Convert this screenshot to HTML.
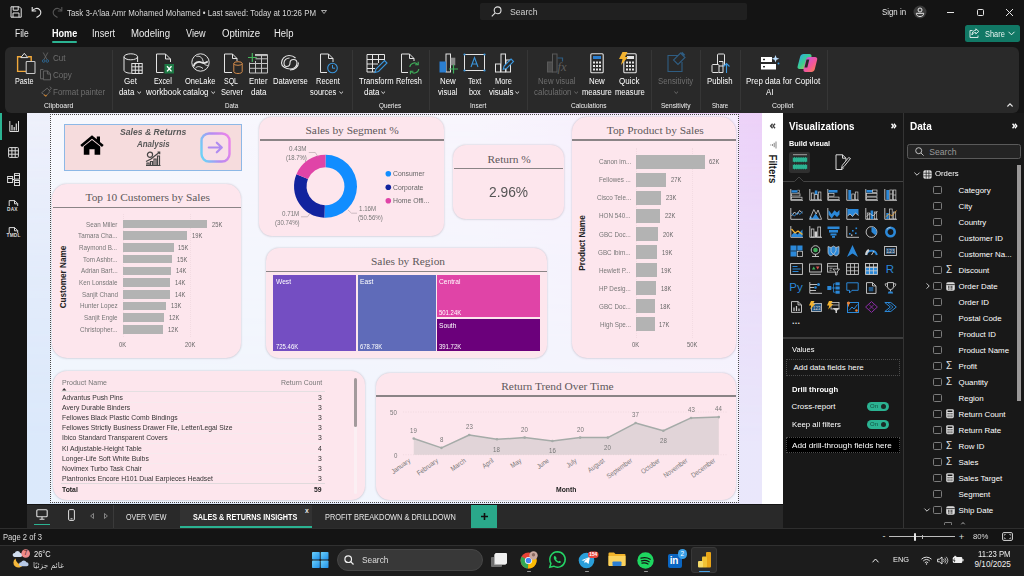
<!DOCTYPE html>
<html lang="en"><head><meta charset="utf-8"><title>Power BI - Sales &amp; Returns Insights</title>
<style>
*{box-sizing:border-box;margin:0;padding:0}
html,body{width:1024px;height:576px;overflow:hidden;background:#141414}
body{position:relative;font-family:"Liberation Sans","DejaVu Sans",sans-serif;color:#fff;font-size:9px}
.a{position:absolute}
.t{position:absolute;white-space:nowrap;line-height:1}
.c{transform:translateX(-50%)}
.r{transform:translateX(-100%)}
svg{position:absolute;overflow:visible}
.serif{font-family:"Liberation Serif","DejaVu Serif",serif}
.card{position:absolute;background:#fde6ed;box-shadow:0 0 2px rgba(120,115,125,.34),0 .5px 2px rgba(120,110,130,.1)}
.ttl{position:absolute;white-space:nowrap;line-height:1;font-family:"Liberation Serif","DejaVu Serif",serif;color:#5f5a5c;transform:translateX(-50%)}
.hl{position:absolute;height:1.5px;background:#8a8486}
.bar{position:absolute;background:#b3b3b3}
.yl{position:absolute;white-space:nowrap;line-height:1;color:#777;font-size:7.6px;transform:translateX(-100%)}
.vl{position:absolute;white-space:nowrap;line-height:1;color:#666;font-size:7.6px}
.rl{position:absolute;white-space:nowrap;line-height:1;font-size:8.2px;color:#fff}
.rg{position:absolute;white-space:nowrap;line-height:1;font-size:7.4px;color:#dcdcdc;transform:translateX(-50%)}
.rd{color:#6e6e6e}
.sep{position:absolute;width:1px;background:#363636;top:50px;height:60px}
.fld{position:absolute;white-space:nowrap;line-height:1;font-size:7.9px;color:#fff;left:958.6px}
.cb{position:absolute;left:933px;width:8.5px;height:8.5px;border:1px solid #7c7c7c;border-radius:1.5px}
.tr{position:absolute;white-space:nowrap;line-height:1;font-size:7.8px;color:#333;left:62px}
.tn{position:absolute;white-space:nowrap;line-height:1;font-size:7.8px;color:#333;left:321.5px;transform:translateX(-100%)}
.tl{position:absolute;left:61px;width:264px;height:.8px;background:#f7eaee}
</style></head>
<body>
<div class="a" style="left:0;top:0;width:1024px;height:46px;background:#141414"></div>
<svg style="left:10px;top:6px" width="12" height="12" viewBox="0 0 12 12" fill="none" stroke="#e6e6e6" stroke-width="1"><path d="M1 .8h8.3l1.9 1.9v8.5H1z"/><path d="M3.2 .8v3.4h5V.8M3 11.2V7h6v4.2"/></svg>
<svg style="left:31px;top:6px" width="12" height="12" viewBox="0 0 12 12" fill="none" stroke="#e6e6e6" stroke-width="1.1"><path d="M1.2 1v4h4"/><path d="M1.5 4.8C3 2.2 6.5 1.5 8.6 3.6c2 2 1.5 5 -.8 6.4L5.5 11.5"/></svg>
<svg style="left:51px;top:6px" width="12" height="12" viewBox="0 0 12 12" fill="none" stroke="#555" stroke-width="1.1"><path d="M10.8 1v4h-4"/><path d="M10.5 4.8C9 2.2 5.5 1.5 3.4 3.6c-2 2-1.5 5 .8 6.4L6.5 11.5"/></svg>
<svg style="left:321.3px;top:9.8px" width="6" height="4" viewBox="0 0 6 4" fill="none" stroke="#cfcfcf" stroke-width=".8"><path d="M.5 .5h5L3 3.5z"/></svg>
<div class="a" style="left:480px;top:3px;width:267px;height:17px;background:#202020;border-radius:2px"></div>
<svg style="left:491px;top:6px" width="11" height="11" viewBox="0 0 11 11" fill="none" stroke="#e0e0e0" stroke-width="1.1"><circle cx="6.6" cy="4.3" r="3.4"/><path d="M4.2 6.8L.8 10.3"/></svg>
<svg style="left:912.5px;top:4.5px" width="14" height="14" viewBox="0 0 14 14"><circle cx="7" cy="7" r="6.5" fill="#3a3a3a"/><circle cx="7" cy="5" r="2" fill="none" stroke="#e6e6e6" stroke-width="1"/><path d="M3.3 8.3h7.4c0 2.2-1.7 3.2-3.7 3.2s-3.7-1-3.7-3.2z" fill="none" stroke="#e6e6e6" stroke-width="1"/></svg>
<div class="a" style="left:947px;top:11.5px;width:7px;height:1px;background:#e6e6e6"></div>
<div class="a" style="left:976.5px;top:8.5px;width:7px;height:7px;border:1px solid #e6e6e6;border-radius:1.5px"></div>
<svg style="left:1005.5px;top:8.5px" width="7" height="7" viewBox="0 0 7 7" stroke="#e6e6e6" stroke-width="1"><path d="M0 0L7 7M7 0L0 7"/></svg>
<div class="a" style="left:51.5px;top:41px;width:25px;height:1.5px;background:#2bb392;border-radius:1px"></div>
<div class="t" style="left:67px;top:9.05px;font-size:8.5px;color:#d8d8d8;transform-origin:0 50%;transform:scaleX(0.929);">Task 3-A'laa Amr Mohamed Mohamed • Last saved: Today at 10:26 PM</div>
<div class="t" style="left:510px;top:6.95px;font-size:9.5px;color:#d0d0d0;transform-origin:0 50%;transform:scaleX(0.914);">Search</div>
<div class="t" style="left:881.75px;top:7.7px;font-size:8.6px;color:#e8e8e8;transform-origin:0 50%;transform:scaleX(0.913);">Sign in</div>
<div class="t" style="left:15px;top:28.6px;font-size:10px;color:#ececec;transform-origin:0 50%;transform:scaleX(0.853);">File</div>
<div class="t" style="left:51.5px;top:28.6px;font-size:10px;color:#fff;font-weight:bold;transform-origin:0 50%;transform:scaleX(0.909);">Home</div>
<div class="t" style="left:92px;top:28.6px;font-size:10px;color:#ececec;transform-origin:0 50%;transform:scaleX(0.92);">Insert</div>
<div class="t" style="left:131.25px;top:28.6px;font-size:10px;color:#ececec;transform-origin:0 50%;transform:scaleX(0.961);">Modeling</div>
<div class="t" style="left:186.25px;top:28.6px;font-size:10px;color:#ececec;transform-origin:0 50%;transform:scaleX(0.907);">View</div>
<div class="t" style="left:221.5px;top:28.6px;font-size:10px;color:#ececec;transform-origin:0 50%;transform:scaleX(0.963);">Optimize</div>
<div class="t" style="left:274.25px;top:28.6px;font-size:10px;color:#ececec;transform-origin:0 50%;transform:scaleX(0.948);">Help</div>
<div class="a" style="left:964.5px;top:25px;width:55px;height:16.5px;background:#117865;border-radius:2.5px"></div>
<svg style="left:969px;top:28px" width="11" height="10" viewBox="0 0 11 10" fill="none" stroke="#e6f4f0" stroke-width=".9"><path d="M3.5 2.5H1v7h8V7.5"/><path d="M6.8 .8l3 2.6-3 2.6V4.5C4.5 4.5 3.5 5.5 3 7c0-3 1.5-4.6 3.8-4.7z"/></svg>
<svg style="left:1008px;top:31px" width="7" height="5" viewBox="0 0 7 5" fill="none" stroke="#e6f4f0" stroke-width="1"><path d="M.5 .8L3.5 3.8 6.5 .8"/></svg>
<div class="t" style="left:985px;top:29.6px;font-size:9px;color:#e6f4f0;transform-origin:0 50%;transform:scaleX(0.822);">Share</div>
<div class="a" style="left:5px;top:46.5px;width:1014px;height:66px;background:#292929;border-radius:6px"></div>
<svg style="left:15.5px;top:52px" width="20" height="23" viewBox="0 0 20 23" fill="none"><path d="M5.2 4.8H1.6v14.6H10M11.8 4.8h3.4V9" stroke="#f2a93b" stroke-width="1.4"/><path d="M4.8 5.6L8.3 1.3l3.5 4.3z" stroke="#e4e4e4" stroke-width="1" stroke-linejoin="round"/><rect x="10.2" y="9.5" width="8.8" height="12" rx=".8" fill="#292929" stroke="#c8c8c8" stroke-width="1.1"/></svg>
<svg style="left:42px;top:52px" width="7" height="11" viewBox="0 0 7 11" fill="none"><path d="M1.2 .5L5 7.5M5.8 .5L2 7.5" stroke="#6a6a6a" stroke-width=".8"/><circle cx="1.7" cy="9" r="1.3" stroke="#2f6f9e" stroke-width=".8"/><circle cx="5.3" cy="9" r="1.3" stroke="#2f6f9e" stroke-width=".8"/></svg>
<svg style="left:40px;top:69px" width="11" height="11" viewBox="0 0 11 11" fill="none" stroke="#6a6a6a" stroke-width=".9"><path d="M3.4 9.8H.5V.5h2.9"/><path d="M3.4 2h4.2l2.9 2.8v6H3.4z"/><path d="M7.4 2v3h3"/></svg>
<svg style="left:40.5px;top:86px" width="11" height="11" viewBox="0 0 11 11" fill="none"><path d="M8.8 .6l1.6 1.6-2.6 3" stroke="#6a6a6a" stroke-width=".9"/><path d="M6.2 2.2l3 3L5 10.2.6 6.8z" stroke="#6a6a6a" stroke-width=".9" stroke-linejoin="round"/><path d="M3 8.8l1.8 1.2 1-1" stroke="#b9772d" stroke-width="1.2"/></svg>
<div class="sep" style="left:112px"></div>
<svg style="left:122.5px;top:52.5px" width="21" height="22" viewBox="0 0 21 22" fill="none" stroke="#e4e4e4" stroke-width="1"><ellipse cx="7.8" cy="3.8" rx="6.8" ry="3"/><path d="M1 3.8v13.4c0 1.6 3 3 6.8 3M14.6 3.8V9"/><rect x="8.8" y="10.5" width="10.4" height="10" fill="#292929"/><path d="M8.8 13.8h10.4M8.8 17.2h10.4M12.3 10.5v10M15.8 10.5v10"/></svg>
<svg style="left:155px;top:52.5px" width="20" height="22" viewBox="0 0 20 22" fill="none"><path d="M1.5 1h9l5 5v3M1.5 1v18.5h7" stroke="#e4e4e4" stroke-width="1"/><path d="M10.5 1v5h5" stroke="#e4e4e4" stroke-width="1"/><rect x="9.5" y="11" width="9.5" height="9.5" fill="#1d7a45"/><path d="M12 13.2l4.5 5.2M16.5 13.2L12 18.4" stroke="#fff" stroke-width="1.3"/></svg>
<svg style="left:190.5px;top:53px" width="19" height="20" viewBox="0 0 19 20" fill="none"><circle cx="9.5" cy="9.5" r="8.7" stroke="#e4e4e4" stroke-width="1"/><path d="M2.5 13.5c1-4 5-5.5 8-4 2 1 4 .8 6.3-1" stroke="#e4e4e4" stroke-width="1.8"/><path d="M5.5 3.5c3-1 6 1 6.5 4.5s3 4.5 5 4.5" stroke="#e4e4e4" stroke-width="1"/><path d="M4 15.5c2-2.5 5-2.5 8 0" stroke="#e4e4e4" stroke-width="1"/></svg>
<svg style="left:223px;top:52.5px" width="21" height="22" viewBox="0 0 21 22" fill="none"><path d="M1.5 1h8l4.5 4.5V8M1.5 1v18.5H9M9.5 1v4.5H14" stroke="#e4e4e4" stroke-width="1"/><ellipse cx="15" cy="10.5" rx="4.2" ry="1.8" stroke="#d38b4a" stroke-width="1"/><path d="M10.8 10.5v8.2c0 1 1.9 1.8 4.2 1.8s4.2-.8 4.2-1.8v-8.2" stroke="#d38b4a" stroke-width="1"/></svg>
<svg style="left:248px;top:52.5px" width="20" height="22" viewBox="0 0 20 22" fill="none"><path d="M7 1.5h12.5v18.5H1.5V9.5M7 2.6h12.5M1.5 10.5h18M1.5 15.3h18M7.5 8v12M13.5 1.5v18.5M7.5 5.8h12" stroke="#c4c4c4" stroke-width="1"/><path d="M4.3 0v9M0 4.5h8.8" stroke="#46b35c" stroke-width="1.2"/></svg>
<svg style="left:280px;top:54px" width="20" height="18" viewBox="0 0 20 18" fill="none" stroke="#e4e4e4" stroke-width="1.1"><path d="M10 9c0-2 1.5-3.5 3.5-3.5S17 7 17 9c0 3.5-3 6-7 6S1.5 12.5 1.5 9 4.5 1.5 9 1.5c3 0 5 1 6.5 2.5"/><path d="M10 9c0 2-1.5 3.5-3.5 3.5S4 11 4 9c0-2.8 2.5-5 5.5-5"/><path d="M18.5 8.5c0 4-3.5 7.5-8.5 7.5"/></svg>
<svg style="left:319px;top:52.5px" width="20" height="22" viewBox="0 0 20 22" fill="none"><path d="M1.5 1h8l4.5 4.5V9M1.5 1v18.5H8M9.5 1v4.5H14" stroke="#e4e4e4" stroke-width="1"/><circle cx="13.5" cy="15" r="4.8" stroke="#3a96dd" stroke-width="1.1"/><path d="M13.5 12v3.2h2.5" stroke="#3a96dd" stroke-width="1"/></svg>
<div class="sep" style="left:351.5px"></div>
<svg style="left:366px;top:52.5px" width="22" height="22" viewBox="0 0 22 22" fill="none"><path d="M1 1.5h17.5V8M1 1.5V19h9M1 6.5h17.5M1 11h11M1 15.5h8M6.5 1.5V19M12.5 1.5V10" stroke="#e4e4e4" stroke-width="1"/><path d="M18.5 7.5l2.5 2.5-8.5 8.5-3.5 1 1-3.5z" fill="#292929" stroke="#3a96dd" stroke-width="1.1"/></svg>
<svg style="left:400px;top:52.5px" width="21" height="22" viewBox="0 0 21 22" fill="none"><path d="M1.5 1h8l4.5 4.5V8M1.5 1v18.5H8M9.5 1v4.5H14" stroke="#e4e4e4" stroke-width="1"/><path d="M9.8 14a4.6 4.6 0 0 1 8-2.5M18.8 16a4.6 4.6 0 0 1-8 2.5" stroke="#3fae5a" stroke-width="1.1"/><path d="M18.2 8.8v3h-3M10.4 21.2v-3h3" stroke="#3fae5a" stroke-width="1.1"/></svg>
<div class="sep" style="left:428.5px"></div>
<svg style="left:438.5px;top:52.5px" width="20" height="22" viewBox="0 0 20 22" fill="none"><rect x="7" y="1" width="4.5" height="18" stroke="#e4e4e4" stroke-width="1"/><rect x="12" y="5" width="4" height="7" fill="#8a8a8a" stroke="#8a8a8a" stroke-width=".6"/><rect x="1" y="9" width="5.5" height="10" fill="#2b7fd1" stroke="#2b7fd1" stroke-width="1"/><path d="M14.5 11.5v9M10 16h9" stroke="#3fae5a" stroke-width="1.2"/></svg>
<svg style="left:463px;top:53px" width="23" height="20" viewBox="0 0 23 20" fill="none"><rect x="1.5" y="1.5" width="20" height="16" stroke="#e4e4e4" stroke-width="1"/><path d="M8 14l3.5-9.5L15 14M9.2 11h4.6" stroke="#3a96dd" stroke-width="1.1"/><g fill="#3a96dd"><circle cx="1.5" cy="1.5" r="1.1"/><circle cx="21.5" cy="1.5" r="1.1"/><circle cx="1.5" cy="17.5" r="1.1"/><circle cx="21.5" cy="17.5" r="1.1"/></g></svg>
<svg style="left:494px;top:52.5px" width="20" height="22" viewBox="0 0 20 22" fill="none"><rect x="7" y="1" width="4.5" height="18" stroke="#e4e4e4" stroke-width="1"/><rect x="1.5" y="11" width="5" height="8" stroke="#e4e4e4" stroke-width="1"/><rect x="12" y="7" width="4.5" height="12" stroke="#e4e4e4" stroke-width="1"/><path d="M17 6l2.5 2.5-7 7-3.2.8.8-3.2z" fill="#292929" stroke="#3a96dd" stroke-width="1.1"/></svg>
<div class="sep" style="left:527px"></div>
<svg style="left:546px;top:52.5px" width="21" height="22" viewBox="0 0 21 22" fill="none"><rect x="6.5" y="1" width="4.5" height="18" stroke="#5a5a5a" stroke-width="1"/><rect x="1.5" y="9" width="5" height="10" fill="#4a4a4a" stroke="#5a5a5a" stroke-width="1"/><path d="M11.5 5h5v3.5" stroke="#2f5d82" stroke-width="1.2"/></svg>
<div class="t serif" style="left:557.5px;top:61px;font-size:12.5px;font-style:italic;color:#5e5e5e">fx</div>
<svg style="left:589.5px;top:52.5px" width="14" height="21" viewBox="0 0 14 21" fill="none"><rect x=".8" y=".8" width="12.4" height="19" rx="1" stroke="#e4e4e4" stroke-width="1.1"/><rect x="3" y="3" width="8" height="3" fill="#2b7fd1"/><g fill="#e4e4e4"><rect x="3" y="8.5" width="2" height="2"/><rect x="6" y="8.5" width="2" height="2"/><rect x="9" y="8.5" width="2" height="2"/><rect x="3" y="12" width="2" height="2"/><rect x="6" y="12" width="2" height="2"/><rect x="9" y="12" width="2" height="2"/><rect x="3" y="15.5" width="2" height="2"/><rect x="6" y="15.5" width="2" height="2"/><rect x="9" y="15.5" width="2" height="2"/></g></svg>
<svg style="left:618.5px;top:51.5px" width="18" height="22" viewBox="0 0 18 22" fill="none"><rect x="4.8" y="1.8" width="12.4" height="19" rx="1" stroke="#e4e4e4" stroke-width="1.1"/><rect x="8" y="4" width="7" height="3" fill="#e4e4e4"/><g fill="#e4e4e4"><rect x="7" y="9.5" width="2" height="2"/><rect x="10" y="9.5" width="2" height="2"/><rect x="13" y="9.5" width="2" height="2"/><rect x="7" y="13" width="2" height="2"/><rect x="10" y="13" width="2" height="2"/><rect x="13" y="13" width="2" height="2"/><rect x="7" y="16.5" width="2" height="2"/><rect x="10" y="16.5" width="2" height="2"/><rect x="13" y="16.5" width="2" height="2"/></g><path d="M3.5 0h5L6 5h3L2 13l1.5-6H0z" fill="#f3b32f"/></svg>
<div class="sep" style="left:651px"></div>
<svg style="left:666px;top:52px" width="21" height="22" viewBox="0 0 21 22" fill="none" stroke="#2f5d82" stroke-width="1.1"><path d="M12 3.5H2v16h14V10"/><path d="M14.5 1l4.5 4.5-7 7-4.5-4.5z"/><path d="M15.5 .5l3 3" stroke-width="2"/></svg>
<div class="sep" style="left:699.5px"></div>
<svg style="left:710.5px;top:52.5px" width="20" height="22" viewBox="0 0 20 22" fill="none"><rect x="6.5" y="1" width="7" height="12" rx="1" stroke="#e4e4e4" stroke-width="1"/><rect x="1" y="11.5" width="7" height="8" rx="1" fill="#292929" stroke="#e4e4e4" stroke-width="1"/><path d="M8 8.5h4v11H8" stroke="#e4e4e4" stroke-width="1"/><path d="M15.5 20v-9M12.5 13.5l3-3 3 3" stroke="#3a96dd" stroke-width="1.1"/></svg>
<div class="sep" style="left:739.5px"></div>
<svg style="left:761px;top:55px" width="19" height="16" viewBox="0 0 19 16"><rect x="0" y="2" width="11" height="5" fill="#fff"/><rect x="0" y="9" width="15" height="5.5" fill="#fff"/><rect x="2" y="3.8" width="2" height="1.4" fill="#292929"/><rect x="2" y="11" width="2" height="1.4" fill="#292929"/><path d="M14.5 0l1 2.8 2.8 1-2.8 1-1 2.8-1-2.8-2.8-1 2.8-1z" fill="#bfe0ff"/><circle cx="17.5" cy="8.5" r="1" fill="#3a96dd"/></svg>
<svg style="left:796.5px;top:53px" width="21" height="20" viewBox="0 0 21 20"><defs><linearGradient id="cg1" x1="0" y1="0" x2="1" y2="1"><stop offset="0" stop-color="#2aa5f5"/><stop offset=".5" stop-color="#3ccf8e"/><stop offset="1" stop-color="#f7c531"/></linearGradient><linearGradient id="cg2" x1="0" y1="0" x2="1" y2="1"><stop offset="0" stop-color="#b45cf0"/><stop offset=".55" stop-color="#f2569b"/><stop offset="1" stop-color="#f98a3d"/></linearGradient></defs><path d="M6.5 1h6c1.5 0 2.3 1 2 2.5l-2.5 10c-.4 1.5-1.5 2.5-3 2.5H2.5C1 16 .2 15 .6 13.5L3.2 3.5C3.6 2 5 1 6.5 1z" fill="url(#cg1)"/><path d="M12 4h6c1.5 0 2.6 1 2.2 2.5l-2.5 10c-.4 1.5-1.7 2.5-3.2 2.5H8.5c-1.5 0-2.3-1-2-2.5L9 6.5C9.4 5 10.5 4 12 4z" fill="url(#cg2)"/><path d="M9.5 6.5l2.8 0-2 8-2.8 0z" fill="#292929"/></svg>
<div class="sep" style="left:826.5px"></div>
<svg style="left:1006.5px;top:102.5px" width="6" height="4" viewBox="0 0 6 4" fill="none" stroke="#e4e4e4" stroke-width="1.1"><path d="M.4 3.5L3 .8 5.6 3.5"/></svg>
<div class="t" style="left:14.5px;top:76.95px;font-size:8.3px;color:#ffffff;transform-origin:0 50%;transform:scaleX(0.872);">Paste</div>
<div class="t" style="left:53px;top:53.55px;font-size:8.3px;color:#6e6e6e;transform-origin:0 50%;transform:scaleX(0.968);">Cut</div>
<div class="t" style="left:53px;top:70.85px;font-size:8.3px;color:#6e6e6e;transform-origin:0 50%;transform:scaleX(0.968);">Copy</div>
<div class="t" style="left:53px;top:88.35px;font-size:8.3px;color:#6e6e6e;transform-origin:0 50%;transform:scaleX(0.968);">Format painter</div>
<div class="t" style="left:124.25px;top:76.95px;font-size:8.3px;color:#ffffff;transform-origin:0 50%;transform:scaleX(0.972);">Get</div>
<div class="t" style="left:119.25px;top:87.95px;font-size:8.3px;color:#ffffff;transform-origin:0 50%;transform:scaleX(0.944);">data</div>
<div class="t" style="left:154.25px;top:76.95px;font-size:8.3px;color:#ffffff;transform-origin:0 50%;transform:scaleX(0.875);">Excel</div>
<div class="t" style="left:145.5px;top:87.95px;font-size:8.3px;color:#ffffff;transform-origin:0 50%;transform:scaleX(0.985);">workbook</div>
<div class="t" style="left:185px;top:76.95px;font-size:8.3px;color:#ffffff;transform-origin:0 50%;transform:scaleX(0.905);">OneLake</div>
<div class="t" style="left:183.25px;top:87.95px;font-size:8.3px;color:#ffffff;transform-origin:0 50%;transform:scaleX(0.953);">catalog</div>
<div class="t" style="left:224.25px;top:76.95px;font-size:8.3px;color:#ffffff;transform-origin:0 50%;transform:scaleX(0.843);">SQL</div>
<div class="t" style="left:220.5px;top:87.95px;font-size:8.3px;color:#ffffff;transform-origin:0 50%;transform:scaleX(0.9);">Server</div>
<div class="t" style="left:248.75px;top:76.95px;font-size:8.3px;color:#ffffff;transform-origin:0 50%;transform:scaleX(0.933);">Enter</div>
<div class="t" style="left:250.5px;top:87.95px;font-size:8.3px;color:#ffffff;transform-origin:0 50%;transform:scaleX(0.96);">data</div>
<div class="t" style="left:273px;top:76.95px;font-size:8.3px;color:#ffffff;transform-origin:0 50%;transform:scaleX(0.919);">Dataverse</div>
<div class="t" style="left:315.5px;top:76.95px;font-size:8.3px;color:#ffffff;transform-origin:0 50%;transform:scaleX(0.903);">Recent</div>
<div class="t" style="left:310.25px;top:87.95px;font-size:8.3px;color:#ffffff;transform-origin:0 50%;transform:scaleX(0.903);">sources</div>
<div class="t" style="left:358.5px;top:76.95px;font-size:8.3px;color:#ffffff;transform-origin:0 50%;transform:scaleX(0.92);">Transform</div>
<div class="t" style="left:364.25px;top:87.95px;font-size:8.3px;color:#ffffff;transform-origin:0 50%;transform:scaleX(0.96);">data</div>
<div class="t" style="left:396px;top:76.95px;font-size:8.3px;color:#ffffff;transform-origin:0 50%;transform:scaleX(0.886);">Refresh</div>
<div class="t" style="left:439.75px;top:76.95px;font-size:8.3px;color:#ffffff;transform-origin:0 50%;transform:scaleX(0.949);">New</div>
<div class="t" style="left:438px;top:87.95px;font-size:8.3px;color:#ffffff;transform-origin:0 50%;transform:scaleX(0.919);">visual</div>
<div class="t" style="left:467.75px;top:76.95px;font-size:8.3px;color:#ffffff;transform-origin:0 50%;transform:scaleX(0.87);">Text</div>
<div class="t" style="left:468.5px;top:87.95px;font-size:8.3px;color:#ffffff;transform-origin:0 50%;transform:scaleX(0.878);">box</div>
<div class="t" style="left:495.25px;top:76.95px;font-size:8.3px;color:#ffffff;transform-origin:0 50%;transform:scaleX(0.899);">More</div>
<div class="t" style="left:489px;top:87.95px;font-size:8.3px;color:#ffffff;transform-origin:0 50%;transform:scaleX(0.966);">visuals</div>
<div class="t" style="left:537.75px;top:76.95px;font-size:8.3px;color:#6e6e6e;transform-origin:0 50%;transform:scaleX(0.934);">New visual</div>
<div class="t" style="left:533.75px;top:87.95px;font-size:8.3px;color:#6e6e6e;transform-origin:0 50%;transform:scaleX(0.956);">calculation</div>
<div class="t" style="left:589px;top:76.95px;font-size:8.3px;color:#ffffff;transform-origin:0 50%;transform:scaleX(0.949);">New</div>
<div class="t" style="left:582px;top:87.95px;font-size:8.3px;color:#ffffff;transform-origin:0 50%;transform:scaleX(0.921);">measure</div>
<div class="t" style="left:619px;top:76.95px;font-size:8.3px;color:#ffffff;transform-origin:0 50%;transform:scaleX(0.966);">Quick</div>
<div class="t" style="left:614.5px;top:87.95px;font-size:8.3px;color:#ffffff;transform-origin:0 50%;transform:scaleX(0.921);">measure</div>
<div class="t" style="left:658px;top:76.95px;font-size:8.3px;color:#6e6e6e;transform-origin:0 50%;transform:scaleX(0.943);">Sensitivity</div>
<div class="t" style="left:707px;top:76.95px;font-size:8.3px;color:#ffffff;transform-origin:0 50%;transform:scaleX(0.937);">Publish</div>
<div class="t" style="left:746px;top:76.95px;font-size:8.3px;color:#ffffff;transform-origin:0 50%;transform:scaleX(0.959);">Prep data for</div>
<div class="t" style="left:765.5px;top:87.95px;font-size:8.3px;color:#ffffff;transform-origin:0 50%;transform:scaleX(0.956);">AI</div>
<div class="t" style="left:794.75px;top:76.95px;font-size:8.3px;color:#ffffff;transform-origin:0 50%;transform:scaleX(0.977);">Copilot</div>
<div class="t" style="left:44px;top:101.8px;font-size:7.2px;color:#f0f0f0;transform-origin:0 50%;transform:scaleX(0.949);">Clipboard</div>
<div class="t" style="left:225px;top:101.8px;font-size:7.2px;color:#f0f0f0;transform-origin:0 50%;transform:scaleX(0.871);">Data</div>
<div class="t" style="left:379px;top:101.8px;font-size:7.2px;color:#f0f0f0;transform-origin:0 50%;transform:scaleX(0.883);">Queries</div>
<div class="t" style="left:469.75px;top:101.8px;font-size:7.2px;color:#f0f0f0;transform-origin:0 50%;transform:scaleX(0.902);">Insert</div>
<div class="t" style="left:571.25px;top:101.8px;font-size:7.2px;color:#f0f0f0;transform-origin:0 50%;transform:scaleX(0.905);">Calculations</div>
<div class="t" style="left:660.75px;top:101.8px;font-size:7.2px;color:#f0f0f0;transform-origin:0 50%;transform:scaleX(0.91);">Sensitivity</div>
<div class="t" style="left:711.5px;top:101.8px;font-size:7.2px;color:#f0f0f0;transform-origin:0 50%;transform:scaleX(0.846);">Share</div>
<div class="t" style="left:772.25px;top:101.8px;font-size:7.2px;color:#f0f0f0;transform-origin:0 50%;transform:scaleX(0.959);">Copilot</div>
<svg style="left:136.8px;top:90.6px" width="4.4" height="3.5" viewBox="0 0 5 4" fill="none" stroke="#e4e4e4" stroke-width="1.1"><path d="M.4 .7L2.5 2.8 4.6 .7"/></svg>
<svg style="left:210.8px;top:90.6px" width="4.4" height="3.5" viewBox="0 0 5 4" fill="none" stroke="#e4e4e4" stroke-width="1.1"><path d="M.4 .7L2.5 2.8 4.6 .7"/></svg>
<svg style="left:338.8px;top:90.6px" width="4.4" height="3.5" viewBox="0 0 5 4" fill="none" stroke="#e4e4e4" stroke-width="1.1"><path d="M.4 .7L2.5 2.8 4.6 .7"/></svg>
<svg style="left:381.3px;top:90.6px" width="4.4" height="3.5" viewBox="0 0 5 4" fill="none" stroke="#e4e4e4" stroke-width="1.1"><path d="M.4 .7L2.5 2.8 4.6 .7"/></svg>
<svg style="left:515.3px;top:90.6px" width="4.4" height="3.5" viewBox="0 0 5 4" fill="none" stroke="#e4e4e4" stroke-width="1.1"><path d="M.4 .7L2.5 2.8 4.6 .7"/></svg>
<svg style="left:573.5px;top:90.6px" width="4.4" height="3.5" viewBox="0 0 5 4" fill="none" stroke="#6e6e6e" stroke-width="1.1"><path d="M.4 .7L2.5 2.8 4.6 .7"/></svg>
<svg style="left:673.5px;top:90.6px" width="4.4" height="3.5" viewBox="0 0 5 4" fill="none" stroke="#6e6e6e" stroke-width="1.1"><path d="M.4 .7L2.5 2.8 4.6 .7"/></svg>
<div class="a" style="left:0;top:113px;width:27px;height:415px;background:#141414"></div>
<div class="a" style="left:0;top:113px;width:2px;height:27px;background:#2bb392"></div>
<svg style="left:8.5px;top:121px" width="10" height="11" viewBox="0 0 10 11" fill="none" stroke="#dcdcdc" stroke-width="1"><path d="M.8 0v10.5h8.7V0"/><path d="M3 9.5V4M5.2 9.5V6M7.3 9.5V2.5" stroke-width="1.2"/></svg>
<svg style="left:8px;top:147px" width="11" height="11" viewBox="0 0 11 11" fill="none" stroke="#dcdcdc" stroke-width="1"><rect x=".6" y=".6" width="9.8" height="9.8" rx=".8"/><path d="M.6 3.8h9.8M.6 7.2h9.8M3.9 .6v9.8M7.2 .6v9.8"/></svg>
<svg style="left:7px;top:173px" width="13" height="13" viewBox="0 0 13 13" fill="none" stroke="#dcdcdc" stroke-width="1"><rect x=".6" y="3.5" width="5" height="6"/><rect x="7.5" y=".6" width="5" height="5.5"/><rect x="7.5" y="7.5" width="5" height="5"/><path d="M5.6 6.5h2M.6 5.5h5M7.5 2.5h5M7.5 9.5h5"/></svg>
<svg style="left:8px;top:200px" width="11" height="13" viewBox="0 0 11 13" fill="none" stroke="#dcdcdc" stroke-width="1"><path d="M1.2 6V.6h5.5l3 3V6M6.5 .6v3.2h3.2"/></svg>
<div class="t" style="left:7px;top:207.5px;font-size:4.8px;font-weight:bold;color:#dcdcdc;letter-spacing:.2px">DAX</div>
<svg style="left:8px;top:226.5px" width="11" height="13" viewBox="0 0 11 13" fill="none" stroke="#dcdcdc" stroke-width="1"><path d="M1.2 6V.6h5.5l3 3V6M6.5 .6v3.2h3.2"/></svg>
<div class="t" style="left:6.5px;top:234px;font-size:4.8px;font-weight:bold;color:#dcdcdc;letter-spacing:.2px">TMDL</div>
<div class="a" style="left:27px;top:113px;width:735px;height:391px;background:linear-gradient(to right,#dbe9fb 0%,#e3e9fb 60%,#eae7fb 100%)"></div>
<div class="a" style="left:27px;top:113px;width:735px;height:391px;background:linear-gradient(to right,#eef0fb 0%,#efe9fa 60%,#ecd0f8 100%);-webkit-mask-image:linear-gradient(to bottom,#000 0%,rgba(0,0,0,.4) 42%,transparent 85%);mask-image:linear-gradient(to bottom,#000 0%,rgba(0,0,0,.4) 42%,transparent 85%)"></div>
<div class="a" style="left:50px;top:114px;width:688.5px;height:389px;background:rgba(255,255,255,.55);border:1px dotted #484848"></div>
<div class="a" style="left:761.5px;top:113px;width:.8px;height:391px;background:#c9c9c9"></div>
<div class="a" style="left:64px;top:124px;width:178px;height:46.5px;background:#f6dcdd;border:1px solid #8db8e6"></div>
<svg style="left:80px;top:134.5px" width="24" height="20" viewBox="0 0 24 20"><path d="M12 .3L.3 10l1.7 2L12 3.8l10 8.2 1.7-2L20 6.9V1.5h-3.2v2.8z" fill="#000"/><path d="M3.8 11.6L12 5l8.2 6.6V19.8h-5.6v-5.6h-5.2v5.6H3.8z" fill="#000"/></svg>
<div class="t" style="left:119.5px;top:127.65px;font-size:9.3px;color:#585858;font-weight:bold;font-style:italic;transform-origin:0 50%;transform:scaleX(0.929);">Sales &amp; Returns</div>
<div class="t" style="left:136.75px;top:139.65px;font-size:9.3px;color:#585858;font-weight:bold;font-style:italic;transform-origin:0 50%;transform:scaleX(0.856);">Analysis</div>
<svg style="left:145px;top:151px" width="16" height="15" viewBox="0 0 16 15" fill="none" stroke="#454545" stroke-width="1.2"><circle cx="5" cy="3.8" r="2.6"/><path d="M1 14.5h14.5M2 14.5v-2.5h2v2.5M5.5 14.5v-4h2v4M9 14.5V8h2v6.5M12.5 14.5V5h2v9.5"/><path d="M1 10.5L6 8l3-2.5L14.5 1.2M12.5 1h2.2v2.2"/></svg>
<svg style="left:200px;top:132px" width="31" height="31" viewBox="0 0 31 31" fill="none"><defs><linearGradient id="ag" x1="0" y1=".65" x2="1" y2=".35"><stop offset="0" stop-color="#6fd0f7"/><stop offset=".5" stop-color="#b48cf2"/><stop offset="1" stop-color="#e884ea"/></linearGradient></defs><linearGradient id="ag2" x1="0" y1="0" x2="1" y2="0"><stop offset="0" stop-color="#e6a4e6"/><stop offset="1" stop-color="#a48af0"/></linearGradient><rect x="1.5" y="1.5" width="28" height="28" rx="7.5" stroke="url(#ag)" stroke-width="2.4" fill="#f8dfe6"/><path d="M8.8 15.5h12.5M16.8 10.7l5 4.8-5 4.8" stroke="#b08cf0" stroke-width="2.2" stroke-linecap="round" stroke-linejoin="round"/></svg>
<div class="card" style="left:52.3px;top:183.7px;width:188.9px;height:174.5px;border-radius:15px"></div>
<div class="t" style="left:85.5px;top:191.7px;font-size:11.4px;color:#5e595b;font-family:'Liberation Serif','DejaVu Serif',serif;">Top 10 Customers by Sales</div>
<div class="hl" style="left:52.5px;top:206.6px;width:188.5px"></div>
<div class="a" style="left:122.5px;top:214px;width:0;height:123px;border-left:.7px dotted #f3dbe2"></div>
<div class="a" style="left:190px;top:214px;width:0;height:123px;border-left:.7px dotted #f3dbe2"></div>
<div class="bar" style="left:122.5px;top:219.8px;width:84.5px;height:8.6px"></div>
<div class="t" style="left:86.09px;top:220.6px;font-size:7.2px;color:#777;transform-origin:0 50%;transform:scaleX(0.875);">Sean Miller</div>
<div class="t" style="left:211.8px;top:220.6px;font-size:7.2px;color:#666;transform-origin:0 50%;transform:scaleX(0.8);">25K</div>
<div class="bar" style="left:122.5px;top:231.49px;width:64.5px;height:8.6px"></div>
<div class="t" style="left:78.04px;top:232.29px;font-size:7.2px;color:#777;transform-origin:0 50%;transform:scaleX(0.875);">Tamara Cha...</div>
<div class="t" style="left:191.8px;top:232.29px;font-size:7.2px;color:#666;transform-origin:0 50%;transform:scaleX(0.8);">19K</div>
<div class="bar" style="left:122.5px;top:243.18px;width:51px;height:8.6px"></div>
<div class="t" style="left:79.44px;top:243.98px;font-size:7.2px;color:#777;transform-origin:0 50%;transform:scaleX(0.875);">Raymond B...</div>
<div class="t" style="left:178.3px;top:243.98px;font-size:7.2px;color:#666;transform-origin:0 50%;transform:scaleX(0.8);">15K</div>
<div class="bar" style="left:122.5px;top:254.87px;width:49.5px;height:8.6px"></div>
<div class="t" style="left:82.94px;top:255.67px;font-size:7.2px;color:#777;transform-origin:0 50%;transform:scaleX(0.875);">Tom Ashbr...</div>
<div class="t" style="left:176.8px;top:255.67px;font-size:7.2px;color:#666;transform-origin:0 50%;transform:scaleX(0.8);">15K</div>
<div class="bar" style="left:122.5px;top:266.56px;width:48.5px;height:8.6px"></div>
<div class="t" style="left:80.84px;top:267.36px;font-size:7.2px;color:#777;transform-origin:0 50%;transform:scaleX(0.875);">Adrian Bart...</div>
<div class="t" style="left:175.8px;top:267.36px;font-size:7.2px;color:#666;transform-origin:0 50%;transform:scaleX(0.8);">14K</div>
<div class="bar" style="left:122.5px;top:278.25px;width:47.75px;height:8.6px"></div>
<div class="t" style="left:79.07px;top:279.05px;font-size:7.2px;color:#777;transform-origin:0 50%;transform:scaleX(0.875);">Ken Lonsdale</div>
<div class="t" style="left:175.05px;top:279.05px;font-size:7.2px;color:#666;transform-origin:0 50%;transform:scaleX(0.8);">14K</div>
<div class="bar" style="left:122.5px;top:289.94px;width:47.5px;height:8.6px"></div>
<div class="t" style="left:81.53px;top:290.74px;font-size:7.2px;color:#777;transform-origin:0 50%;transform:scaleX(0.875);">Sanjit Chand</div>
<div class="t" style="left:174.8px;top:290.74px;font-size:7.2px;color:#666;transform-origin:0 50%;transform:scaleX(0.8);">14K</div>
<div class="bar" style="left:122.5px;top:301.63px;width:43.25px;height:8.6px"></div>
<div class="t" style="left:79.78px;top:302.43px;font-size:7.2px;color:#777;transform-origin:0 50%;transform:scaleX(0.875);">Hunter Lopez</div>
<div class="t" style="left:170.55px;top:302.43px;font-size:7.2px;color:#666;transform-origin:0 50%;transform:scaleX(0.8);">13K</div>
<div class="bar" style="left:122.5px;top:313.32px;width:41.25px;height:8.6px"></div>
<div class="t" style="left:83.98px;top:314.12px;font-size:7.2px;color:#777;transform-origin:0 50%;transform:scaleX(0.875);">Sanjit Engle</div>
<div class="t" style="left:168.55px;top:314.12px;font-size:7.2px;color:#666;transform-origin:0 50%;transform:scaleX(0.8);">12K</div>
<div class="bar" style="left:122.5px;top:325.01px;width:40.75px;height:8.6px"></div>
<div class="t" style="left:80.13px;top:325.81px;font-size:7.2px;color:#777;transform-origin:0 50%;transform:scaleX(0.875);">Christopher...</div>
<div class="t" style="left:168.05px;top:325.81px;font-size:7.2px;color:#666;transform-origin:0 50%;transform:scaleX(0.8);">12K</div>
<div class="t" style="left:118.98px;top:340.7px;font-size:7.2px;color:#666;transform-origin:0 50%;transform:scaleX(0.8);">0K</div>
<div class="t" style="left:184.88px;top:340.7px;font-size:7.2px;color:#666;transform-origin:0 50%;transform:scaleX(0.8);">20K</div>
<div class="t" style="left:63.2px;top:276.6px;font-size:8.4px;font-weight:bold;color:#222;transform:translate(-50%,-50%) rotate(-90deg) scaleX(.975)">Customer Name</div>
<div class="card" style="left:259.3px;top:116.8px;width:184.5px;height:119.7px;border-radius:13px"></div>
<div class="t" style="left:305.5px;top:124.9px;font-size:11.4px;color:#5e595b;font-family:'Liberation Serif','DejaVu Serif',serif;">Sales by Segment %</div>
<div class="hl" style="left:259.5px;top:139.2px;width:184px"></div>
<svg style="left:0;top:0" width="1024" height="576" viewBox="0 0 1024 576"><path d="M325.5 154.8A31.5 31.5 0 1 1 324.39 217.78L324.83 205.29A19 19 0 1 0 325.5 167.3Z" fill="#118dff"/><path d="M324.39 217.78A31.5 31.5 0 0 1 296.44 174.15L307.97 178.97A19 19 0 0 0 324.83 205.29Z" fill="#12239e"/><path d="M296.44 174.15A31.5 31.5 0 0 1 325.5 154.8L325.5 167.3A19 19 0 0 0 307.97 178.97Z" fill="#e044a7"/><path d="M308.8 152.5h6.5l2.5 4M348 210l3.5 3.2h5.5M301 216.8h6.5l2.5-3.5" fill="none" stroke="#b9a9af" stroke-width=".7"/><circle cx="388.3" cy="173.8" r="2.8" fill="#118dff"/><circle cx="388.3" cy="187.3" r="2.8" fill="#12239e"/><circle cx="388.3" cy="200.8" r="2.8" fill="#e044a7"/></svg>
<div class="t" style="left:392.5px;top:170.1px;font-size:7.6px;color:#666;transform-origin:0 50%;transform:scaleX(0.9);">Consumer</div>
<div class="t" style="left:392.5px;top:183.6px;font-size:7.6px;color:#666;transform-origin:0 50%;transform:scaleX(0.9);">Corporate</div>
<div class="t" style="left:392.5px;top:197.1px;font-size:7.6px;color:#666;transform-origin:0 50%;transform:scaleX(0.9);">Home Offi...</div>
<div class="t" style="left:289px;top:145.1px;font-size:7px;color:#777;transform-origin:0 50%;transform:scaleX(0.9);">0.43M</div>
<div class="t" style="left:286px;top:153.8px;font-size:7px;color:#777;transform-origin:0 50%;transform:scaleX(0.849);">(18.7%)</div>
<div class="t" style="left:358.8px;top:205.3px;font-size:7px;color:#777;transform-origin:0 50%;transform:scaleX(0.884);">1.16M</div>
<div class="t" style="left:358.3px;top:213.9px;font-size:7px;color:#777;transform-origin:0 50%;transform:scaleX(0.87);">(50.56%)</div>
<div class="t" style="left:282px;top:210.3px;font-size:7px;color:#777;transform-origin:0 50%;transform:scaleX(0.889);">0.71M</div>
<div class="t" style="left:274.7px;top:219px;font-size:7px;color:#777;transform-origin:0 50%;transform:scaleX(0.866);">(30.74%)</div>
<div class="card" style="left:453px;top:145px;width:110.5px;height:74px;border-radius:13px"></div>
<div class="t" style="left:487.5px;top:153.5px;font-size:11.4px;color:#5e595b;font-family:'Liberation Serif','DejaVu Serif',serif;">Return %</div>
<div class="hl" style="left:453.5px;top:167.5px;width:109.5px"></div>
<div class="t" style="left:488.5px;top:184.95px;font-size:14.5px;color:#555;transform-origin:0 50%;transform:scaleX(0.949);">2.96%</div>
<div class="card" style="left:571.6px;top:116.8px;width:164.7px;height:241.2px;border-radius:15px"></div>
<div class="t" style="left:606.75px;top:124.9px;font-size:11.4px;color:#5e595b;font-family:'Liberation Serif','DejaVu Serif',serif;">Top Product by Sales</div>
<div class="hl" style="left:571.8px;top:139.2px;width:164px"></div>
<div class="a" style="left:635.5px;top:148px;width:0;height:190px;border-left:.7px dotted #f3dbe2"></div>
<div class="a" style="left:691.8px;top:148px;width:0;height:190px;border-left:.7px dotted #f3dbe2"></div>
<div class="bar" style="left:635.5px;top:154.9px;width:69px;height:13.8px"></div>
<div class="t" style="left:598.59px;top:158.3px;font-size:7.2px;color:#777;transform-origin:0 50%;transform:scaleX(0.875);">Canon im...</div>
<div class="t" style="left:709.3px;top:158.3px;font-size:7.2px;color:#666;transform-origin:0 50%;transform:scaleX(0.8);">62K</div>
<div class="bar" style="left:635.5px;top:172.95px;width:30.75px;height:13.8px"></div>
<div class="t" style="left:598.94px;top:176.35px;font-size:7.2px;color:#777;transform-origin:0 50%;transform:scaleX(0.875);">Fellowes ...</div>
<div class="t" style="left:671.05px;top:176.35px;font-size:7.2px;color:#666;transform-origin:0 50%;transform:scaleX(0.8);">27K</div>
<div class="bar" style="left:635.5px;top:191px;width:25.25px;height:13.8px"></div>
<div class="t" style="left:596.6px;top:194.4px;font-size:7.2px;color:#777;transform-origin:0 50%;transform:scaleX(0.875);">Cisco Tele...</div>
<div class="t" style="left:665.55px;top:194.4px;font-size:7.2px;color:#666;transform-origin:0 50%;transform:scaleX(0.8);">23K</div>
<div class="bar" style="left:635.5px;top:209.05px;width:24.5px;height:13.8px"></div>
<div class="t" style="left:599.29px;top:212.45px;font-size:7.2px;color:#777;transform-origin:0 50%;transform:scaleX(0.875);">HON 540...</div>
<div class="t" style="left:664.8px;top:212.45px;font-size:7.2px;color:#666;transform-origin:0 50%;transform:scaleX(0.8);">22K</div>
<div class="bar" style="left:635.5px;top:227.1px;width:22.25px;height:13.8px"></div>
<div class="t" style="left:598.94px;top:230.5px;font-size:7.2px;color:#777;transform-origin:0 50%;transform:scaleX(0.875);">GBC Doc...</div>
<div class="t" style="left:662.55px;top:230.5px;font-size:7.2px;color:#666;transform-origin:0 50%;transform:scaleX(0.8);">20K</div>
<div class="bar" style="left:635.5px;top:245.15px;width:21.25px;height:13.8px"></div>
<div class="t" style="left:598.25px;top:248.55px;font-size:7.2px;color:#777;transform-origin:0 50%;transform:scaleX(0.875);">GBC Ibim...</div>
<div class="t" style="left:661.55px;top:248.55px;font-size:7.2px;color:#666;transform-origin:0 50%;transform:scaleX(0.8);">19K</div>
<div class="bar" style="left:635.5px;top:263.2px;width:21px;height:13.8px"></div>
<div class="t" style="left:599.4px;top:266.6px;font-size:7.2px;color:#777;transform-origin:0 50%;transform:scaleX(0.875);">Hewlett P...</div>
<div class="t" style="left:661.3px;top:266.6px;font-size:7.2px;color:#666;transform-origin:0 50%;transform:scaleX(0.8);">19K</div>
<div class="bar" style="left:635.5px;top:281.25px;width:20.25px;height:13.8px"></div>
<div class="t" style="left:599.05px;top:284.65px;font-size:7.2px;color:#777;transform-origin:0 50%;transform:scaleX(0.875);">HP Desig...</div>
<div class="t" style="left:660.55px;top:284.65px;font-size:7.2px;color:#666;transform-origin:0 50%;transform:scaleX(0.8);">18K</div>
<div class="bar" style="left:635.5px;top:299.3px;width:19.75px;height:13.8px"></div>
<div class="t" style="left:598.94px;top:302.7px;font-size:7.2px;color:#777;transform-origin:0 50%;transform:scaleX(0.875);">GBC Doc...</div>
<div class="t" style="left:660.05px;top:302.7px;font-size:7.2px;color:#666;transform-origin:0 50%;transform:scaleX(0.8);">18K</div>
<div class="bar" style="left:635.5px;top:317.35px;width:19px;height:13.8px"></div>
<div class="t" style="left:599.63px;top:320.75px;font-size:7.2px;color:#777;transform-origin:0 50%;transform:scaleX(0.875);">High Spe...</div>
<div class="t" style="left:659.3px;top:320.75px;font-size:7.2px;color:#666;transform-origin:0 50%;transform:scaleX(0.8);">17K</div>
<div class="t" style="left:631.98px;top:341.2px;font-size:7.2px;color:#666;transform-origin:0 50%;transform:scaleX(0.8);">0K</div>
<div class="t" style="left:686.68px;top:341.2px;font-size:7.2px;color:#666;transform-origin:0 50%;transform:scaleX(0.8);">50K</div>
<div class="t" style="left:581.7px;top:243px;font-size:8.4px;font-weight:bold;color:#222;transform:translate(-50%,-50%) rotate(-90deg) scaleX(.975)">Product Name</div>
<div class="card" style="left:265.6px;top:247.5px;width:281.3px;height:110.5px;border-radius:13px"></div>
<div class="t" style="left:371px;top:255.7px;font-size:11.4px;color:#5e595b;font-family:'Liberation Serif','DejaVu Serif',serif;">Sales by Region</div>
<div class="hl" style="left:266px;top:270.5px;width:280.5px"></div>
<div class="a" style="left:273.1px;top:275px;width:83.4px;height:76px;background:#744ec2"></div>
<div class="a" style="left:357.7px;top:275px;width:78.1px;height:76px;background:#5f6bb9"></div>
<div class="a" style="left:437px;top:275px;width:103px;height:42.4px;background:#e044a7"></div>
<div class="a" style="left:437px;top:318.5px;width:103px;height:32.5px;background:#6b007b"></div>
<div class="t" style="left:275.6px;top:278.3px;font-size:7.4px;color:#fff;transform-origin:0 50%;transform:scaleX(0.9);">West</div>
<div class="t" style="left:359.7px;top:278.3px;font-size:7.4px;color:#fff;transform-origin:0 50%;transform:scaleX(0.9);">East</div>
<div class="t" style="left:439px;top:278.3px;font-size:7.4px;color:#fff;transform-origin:0 50%;transform:scaleX(0.9);">Central</div>
<div class="t" style="left:439px;top:321.8px;font-size:7.4px;color:#fff;transform-origin:0 50%;transform:scaleX(0.9);">South</div>
<div class="t" style="left:275.6px;top:343.9px;font-size:6.8px;color:#fff;transform-origin:0 50%;transform:scaleX(0.875);">725.46K</div>
<div class="t" style="left:359.7px;top:343.9px;font-size:6.8px;color:#fff;transform-origin:0 50%;transform:scaleX(0.875);">678.78K</div>
<div class="t" style="left:439px;top:310.1px;font-size:6.8px;color:#fff;transform-origin:0 50%;transform:scaleX(0.875);">501.24K</div>
<div class="t" style="left:439px;top:343.9px;font-size:6.8px;color:#fff;transform-origin:0 50%;transform:scaleX(0.875);">391.72K</div>
<div class="card" style="left:52.5px;top:371px;width:312px;height:129px;border-radius:14px"></div>
<div class="t" style="left:62px;top:379.1px;font-size:7.6px;color:#777;transform-origin:0 50%;transform:scaleX(0.926);">Product Name</div>
<div class="t" style="left:280.5px;top:379.1px;font-size:7.6px;color:#777;transform-origin:0 50%;transform:scaleX(0.913);">Return Count</div>
<svg style="left:62.3px;top:387.7px" width="4.4" height="2.6" viewBox="0 0 5 3"><path d="M0 3L2.5 0 5 3z" fill="#333"/></svg>
<div class="a" style="left:61px;top:390.7px;width:264px;height:1px;background:#e4dfe1"></div>
<div class="t" style="left:62px;top:393.6px;font-size:7.6px;color:#333;transform-origin:0 50%;transform:scaleX(0.898);">Advantus Push Pins</div>
<div class="t" style="left:317.9px;top:393.6px;font-size:7.6px;color:#333;transform-origin:0 50%;transform:scaleX(0.9);">3</div>
<div class="tl" style="top:402px"></div>
<div class="t" style="left:62px;top:403.79px;font-size:7.6px;color:#333;transform-origin:0 50%;transform:scaleX(0.898);">Avery Durable Binders</div>
<div class="t" style="left:317.9px;top:403.79px;font-size:7.6px;color:#333;transform-origin:0 50%;transform:scaleX(0.9);">3</div>
<div class="tl" style="top:412.19px"></div>
<div class="t" style="left:62px;top:413.98px;font-size:7.6px;color:#333;transform-origin:0 50%;transform:scaleX(0.898);">Fellowes Black Plastic Comb Bindings</div>
<div class="t" style="left:317.9px;top:413.98px;font-size:7.6px;color:#333;transform-origin:0 50%;transform:scaleX(0.9);">3</div>
<div class="tl" style="top:422.38px"></div>
<div class="t" style="left:62px;top:424.17px;font-size:7.6px;color:#333;transform-origin:0 50%;transform:scaleX(0.898);">Fellowes Strictly Business Drawer File, Letter/Legal Size</div>
<div class="t" style="left:317.9px;top:424.17px;font-size:7.6px;color:#333;transform-origin:0 50%;transform:scaleX(0.9);">3</div>
<div class="tl" style="top:432.57px"></div>
<div class="t" style="left:62px;top:434.36px;font-size:7.6px;color:#333;transform-origin:0 50%;transform:scaleX(0.898);">Ibico Standard Transparent Covers</div>
<div class="t" style="left:317.9px;top:434.36px;font-size:7.6px;color:#333;transform-origin:0 50%;transform:scaleX(0.9);">3</div>
<div class="tl" style="top:442.76px"></div>
<div class="t" style="left:62px;top:444.55px;font-size:7.6px;color:#333;transform-origin:0 50%;transform:scaleX(0.898);">KI Adjustable-Height Table</div>
<div class="t" style="left:317.9px;top:444.55px;font-size:7.6px;color:#333;transform-origin:0 50%;transform:scaleX(0.9);">4</div>
<div class="tl" style="top:452.95px"></div>
<div class="t" style="left:62px;top:454.74px;font-size:7.6px;color:#333;transform-origin:0 50%;transform:scaleX(0.898);">Longer-Life Soft White Bulbs</div>
<div class="t" style="left:317.9px;top:454.74px;font-size:7.6px;color:#333;transform-origin:0 50%;transform:scaleX(0.9);">3</div>
<div class="tl" style="top:463.14px"></div>
<div class="t" style="left:62px;top:464.93px;font-size:7.6px;color:#333;transform-origin:0 50%;transform:scaleX(0.898);">Novimex Turbo Task Chair</div>
<div class="t" style="left:317.9px;top:464.93px;font-size:7.6px;color:#333;transform-origin:0 50%;transform:scaleX(0.9);">3</div>
<div class="tl" style="top:473.33px"></div>
<div class="t" style="left:62px;top:475.12px;font-size:7.6px;color:#333;transform-origin:0 50%;transform:scaleX(0.898);">Plantronics Encore H101 Dual Earpieces Headset</div>
<div class="t" style="left:317.9px;top:475.12px;font-size:7.6px;color:#333;transform-origin:0 50%;transform:scaleX(0.9);">3</div>
<div class="a" style="left:61px;top:483.3px;width:264px;height:1px;background:#e0dadc"></div>
<div class="t" style="left:62px;top:485.8px;font-size:7.6px;color:#222;font-weight:bold;transform-origin:0 50%;transform:scaleX(0.9);">Total</div>
<div class="t" style="left:314.09px;top:485.8px;font-size:7.6px;color:#222;font-weight:bold;transform-origin:0 50%;transform:scaleX(0.9);">59</div>
<div class="a" style="left:353.8px;top:378px;width:3.4px;height:116px;background:#fbeff3;border-radius:2px"></div>
<div class="a" style="left:353.8px;top:378px;width:3.4px;height:48.5px;background:#a39a9c;border-radius:2px"></div>
<div class="card" style="left:375.8px;top:372.7px;width:360.5px;height:127.6px;border-radius:14px"></div>
<div class="t" style="left:501.25px;top:380.9px;font-size:11.4px;color:#5e595b;font-family:'Liberation Serif','DejaVu Serif',serif;">Return Trend Over Time</div>
<div class="hl" style="left:376.3px;top:395.2px;width:359.5px"></div>
<svg style="left:0;top:0" width="1024" height="576" viewBox="0 0 1024 576"><path d="M403 412h325M403 454.7h325" stroke="#ecd5db" stroke-width=".7" stroke-dasharray="1 1.5" fill="none"/><polygon points="413.75,454.7 413.75,438.45 441.48,447.86 469.21,435.03 496.94,439.31 524.67,437.6 552.4,441.02 580.13,437.6 607.86,437.6 635.59,423.06 663.32,430.76 691.05,417.94 718.78,417.08 718.78,454.7" fill="#a8aeab" fill-opacity=".32"/><polyline points="413.75,438.45 441.48,447.86 469.21,435.03 496.94,439.31 524.67,437.6 552.4,441.02 580.13,437.6 607.86,437.6 635.59,423.06 663.32,430.76 691.05,417.94 718.78,417.08" fill="none" stroke="#a5aba8" stroke-width="1.5" stroke-linejoin="round"/><circle cx="413.75" cy="438.45" r="1.3" fill="#a5aba8"/><circle cx="441.48" cy="447.86" r="1.3" fill="#a5aba8"/><circle cx="469.21" cy="435.03" r="1.3" fill="#a5aba8"/><circle cx="496.94" cy="439.31" r="1.3" fill="#a5aba8"/><circle cx="524.67" cy="437.6" r="1.3" fill="#a5aba8"/><circle cx="552.4" cy="441.02" r="1.3" fill="#a5aba8"/><circle cx="580.13" cy="437.6" r="1.3" fill="#a5aba8"/><circle cx="607.86" cy="437.6" r="1.3" fill="#a5aba8"/><circle cx="635.59" cy="423.06" r="1.3" fill="#a5aba8"/><circle cx="663.32" cy="430.76" r="1.3" fill="#a5aba8"/><circle cx="691.05" cy="417.94" r="1.3" fill="#a5aba8"/><circle cx="718.78" cy="417.08" r="1.3" fill="#a5aba8"/><text x="0" y="0" font-size="7.3" fill="#777" text-anchor="end" transform="translate(410.95 461.7) rotate(-35.5) scale(.83 .96)" font-family="Liberation Sans, sans-serif">January</text><text x="0" y="0" font-size="7.3" fill="#777" text-anchor="end" transform="translate(438.68 461.7) rotate(-35.5) scale(.83 .96)" font-family="Liberation Sans, sans-serif">February</text><text x="0" y="0" font-size="7.3" fill="#777" text-anchor="end" transform="translate(466.41 461.7) rotate(-35.5) scale(.83 .96)" font-family="Liberation Sans, sans-serif">March</text><text x="0" y="0" font-size="7.3" fill="#777" text-anchor="end" transform="translate(494.14 461.7) rotate(-35.5) scale(.83 .96)" font-family="Liberation Sans, sans-serif">April</text><text x="0" y="0" font-size="7.3" fill="#777" text-anchor="end" transform="translate(521.87 461.7) rotate(-35.5) scale(.83 .96)" font-family="Liberation Sans, sans-serif">May</text><text x="0" y="0" font-size="7.3" fill="#777" text-anchor="end" transform="translate(549.6 461.7) rotate(-35.5) scale(.83 .96)" font-family="Liberation Sans, sans-serif">June</text><text x="0" y="0" font-size="7.3" fill="#777" text-anchor="end" transform="translate(577.33 461.7) rotate(-35.5) scale(.83 .96)" font-family="Liberation Sans, sans-serif">July</text><text x="0" y="0" font-size="7.3" fill="#777" text-anchor="end" transform="translate(605.06 461.7) rotate(-35.5) scale(.83 .96)" font-family="Liberation Sans, sans-serif">August</text><text x="0" y="0" font-size="7.3" fill="#777" text-anchor="end" transform="translate(632.79 461.7) rotate(-35.5) scale(.83 .96)" font-family="Liberation Sans, sans-serif">September</text><text x="0" y="0" font-size="7.3" fill="#777" text-anchor="end" transform="translate(660.52 461.7) rotate(-35.5) scale(.83 .96)" font-family="Liberation Sans, sans-serif">October</text><text x="0" y="0" font-size="7.3" fill="#777" text-anchor="end" transform="translate(688.25 461.7) rotate(-35.5) scale(.83 .96)" font-family="Liberation Sans, sans-serif">November</text><text x="0" y="0" font-size="7.3" fill="#777" text-anchor="end" transform="translate(715.98 461.7) rotate(-35.5) scale(.83 .96)" font-family="Liberation Sans, sans-serif">December</text></svg>
<div class="t" style="left:410.35px;top:426.9px;font-size:7.2px;color:#777;transform-origin:0 50%;transform:scaleX(0.85);">19</div>
<div class="t" style="left:439.6px;top:435.6px;font-size:7.2px;color:#777;transform-origin:0 50%;transform:scaleX(0.85);">8</div>
<div class="t" style="left:465.9px;top:423.1px;font-size:7.2px;color:#777;transform-origin:0 50%;transform:scaleX(0.85);">23</div>
<div class="t" style="left:493.4px;top:445.6px;font-size:7.2px;color:#777;transform-origin:0 50%;transform:scaleX(0.85);">18</div>
<div class="t" style="left:521.1px;top:426.1px;font-size:7.2px;color:#777;transform-origin:0 50%;transform:scaleX(0.85);">20</div>
<div class="t" style="left:548.9px;top:447.1px;font-size:7.2px;color:#777;transform-origin:0 50%;transform:scaleX(0.85);">16</div>
<div class="t" style="left:576.6px;top:426.1px;font-size:7.2px;color:#777;transform-origin:0 50%;transform:scaleX(0.85);">20</div>
<div class="t" style="left:604.4px;top:443.9px;font-size:7.2px;color:#777;transform-origin:0 50%;transform:scaleX(0.85);">20</div>
<div class="t" style="left:632.1px;top:411.4px;font-size:7.2px;color:#777;transform-origin:0 50%;transform:scaleX(0.85);">37</div>
<div class="t" style="left:659.9px;top:436.9px;font-size:7.2px;color:#777;transform-origin:0 50%;transform:scaleX(0.85);">28</div>
<div class="t" style="left:687.6px;top:406.1px;font-size:7.2px;color:#777;transform-origin:0 50%;transform:scaleX(0.85);">43</div>
<div class="t" style="left:715.4px;top:405.4px;font-size:7.2px;color:#777;transform-origin:0 50%;transform:scaleX(0.85);">44</div>
<div class="t" style="left:390.1px;top:409.1px;font-size:7.2px;color:#777;transform-origin:0 50%;transform:scaleX(0.85);">50</div>
<div class="t" style="left:393.8px;top:451.8px;font-size:7.2px;color:#777;transform-origin:0 50%;transform:scaleX(0.85);">0</div>
<div class="t" style="left:556.09px;top:486.2px;font-size:7.4px;color:#222;font-weight:bold;transform-origin:0 50%;transform:scaleX(0.92);">Month</div>
<div class="a" style="left:762.3px;top:113px;width:21px;height:391px;background:#fff"></div>
<svg style="left:769.5px;top:123.3px" width="5.5" height="6" viewBox="0 0 6 6" fill="none" stroke="#3c3c3c" stroke-width="1.4"><path d="M2.8 .5L.6 3l2.2 2.5M5.5 .5L3.3 3l2.2 2.5"/></svg>
<svg style="left:770px;top:141px" width="7" height="8" viewBox="0 0 7 8" fill="none" stroke="#777" stroke-width=".9"><path d="M6 .5v7M4.2 1.8v4.4M2.4 3v2M.6 3.6v.8"/></svg>
<div class="t" style="left:772.2px;top:168.8px;font-size:10.4px;font-weight:bold;color:#1a1a1a;transform:translate(-50%,-50%) rotate(90deg) scaleX(.93)">Filters</div>
<div class="a" style="left:783.3px;top:113px;width:120px;height:415px;background:#181818"></div>
<div class="a" style="left:903px;top:113px;width:1px;height:415px;background:#343434"></div>
<div class="a" style="left:904px;top:113px;width:120px;height:415px;background:#181818"></div>
<div class="t" style="left:789px;top:121.1px;font-size:10.6px;color:#fff;font-weight:bold;transform-origin:0 50%;transform:scaleX(0.929);">Visualizations</div>
<svg style="left:891.3px;top:123.3px" width="5.5" height="6" viewBox="0 0 6 6" fill="none" stroke="#fff" stroke-width="1.5"><path d="M.6 .6L2.6 3 .6 5.4M3.2 .6L5.2 3 3.2 5.4"/></svg>
<div class="t" style="left:789px;top:140px;font-size:7.8px;color:#fff;font-weight:bold;transform-origin:0 50%;transform:scaleX(0.937);">Build visual</div>
<div class="a" style="left:789px;top:151.8px;width:21.2px;height:20.8px;background:#2f2f2f;border-radius:2px"></div>
<svg style="left:791.5px;top:154px" width="16" height="17" viewBox="0 0 16 17" fill="none"><path d="M1 .7h14" stroke="#bdbdbd" stroke-width=".8"/><rect x=".8" y="3.2" width="14.4" height="5" fill="#2bb392"/><rect x=".8" y="10.3" width="14.4" height="5" fill="#2bb392"/><path d="M.8 3.2h14.4M.8 8.2h14.4M.8 10.3h14.4M.8 15.3h14.4" stroke="#181818" stroke-width=".7" stroke-dasharray="1.2 1"/></svg>
<svg style="left:835px;top:154px" width="17" height="17" viewBox="0 0 17 17" fill="none" stroke="#d8d8d8" stroke-width="1"><path d="M7 15.5H1V.8h6.5L11 4.2V7M7.5 .8v3.4H11"/><path d="M15.5 4.5L9 12.5l-2.5 2 .8-3.2 6.4-7.8z" fill="#181818"/><path d="M5.5 15.5c1.5 0 2.5-.6 3.3-1.6"/></svg>
<svg style="left:783.3px;top:176px" width="120" height="7" viewBox="0 0 120 7" fill="none" stroke="#4a4a4a" stroke-width=".9"><path d="M0 5.5h11.5l4.5-4.5 4.5 4.5H120"/></svg>
<svg style="left:789.5px;top:189px" width="13" height="12" viewBox="0 0 13 12" fill="none"><path d="M.8 0v11.3H13" stroke="#d0d0d0" stroke-width=".9"/><rect x="1.5" y="1.2" width="6" height="2.4" fill="#2b88d8"/><path d="M7.5 1.2h2v2.4h-2" stroke="#d0d0d0" stroke-width=".6"/><rect x="1.5" y="4.8" width="8.5" height="2.2" stroke="#d0d0d0" stroke-width=".7"/><rect x="1.5" y="8.2" width="10.5" height="2.2" stroke="#d0d0d0" stroke-width=".7"/></svg>
<svg style="left:808.5px;top:189px" width="13" height="12" viewBox="0 0 13 12" fill="none"><path d="M.8 0v11.3H13" stroke="#d0d0d0" stroke-width=".9"/><rect x="2.5" y="4" width="2.6" height="6.8" stroke="#d0d0d0" stroke-width=".7"/><rect x="5.8" y="1.5" width="2.6" height="9.3" fill="#2b88d8"/><rect x="5.8" y="5.5" width="2.6" height="5.3" stroke="#d0d0d0" stroke-width=".7" fill="#181818"/><rect x="9.3" y="3" width="2.6" height="7.8" stroke="#d0d0d0" stroke-width=".7"/></svg>
<svg style="left:827.25px;top:189px" width="13" height="12" viewBox="0 0 13 12" fill="none"><path d="M.8 0v11.3H13" stroke="#d0d0d0" stroke-width=".9"/><rect x="1.5" y="1" width="9" height="2.6" fill="#2b88d8"/><rect x="1.5" y="4.6" width="5.5" height="2.6" stroke="#d0d0d0" stroke-width=".7"/><rect x="1.5" y="8.1" width="10.5" height="2.3" stroke="#d0d0d0" stroke-width=".7"/></svg>
<svg style="left:846px;top:189px" width="13" height="12" viewBox="0 0 13 12" fill="none"><path d="M.8 0v11.3H13" stroke="#d0d0d0" stroke-width=".9"/><rect x="2.3" y="1" width="2.8" height="9.8" fill="#2b88d8"/><rect x="5.8" y="5" width="2.6" height="5.8" stroke="#d0d0d0" stroke-width=".7"/><rect x="9.3" y="3" width="2.6" height="7.8" stroke="#d0d0d0" stroke-width=".7"/></svg>
<svg style="left:864.75px;top:189px" width="13" height="12" viewBox="0 0 13 12" fill="none"><path d="M.8 0v11.3H13" stroke="#d0d0d0" stroke-width=".9"/><rect x="1.5" y="1" width="6" height="2.6" fill="#2b88d8"/><rect x="7.5" y="1" width="4.5" height="2.6" stroke="#d0d0d0" stroke-width=".7"/><rect x="1.5" y="4.6" width="10.5" height="2.6" stroke="#d0d0d0" stroke-width=".7"/><rect x="1.5" y="8.1" width="10.5" height="2.3" stroke="#d0d0d0" stroke-width=".7"/></svg>
<svg style="left:883.5px;top:189px" width="13" height="12" viewBox="0 0 13 12" fill="none"><path d="M.8 0v11.3H13" stroke="#d0d0d0" stroke-width=".9"/><rect x="2.3" y="1" width="2.8" height="9.8" fill="#2b88d8"/><rect x="5.8" y="1" width="2.6" height="9.8" stroke="#d0d0d0" stroke-width=".7"/><rect x="9.3" y="1" width="2.6" height="9.8" stroke="#d0d0d0" stroke-width=".7"/><path d="M5.8 5h2.6M9.3 6h2.6" stroke="#d0d0d0" stroke-width=".7"/></svg>
<svg style="left:789.5px;top:207.5px" width="13" height="12" viewBox="0 0 13 12" fill="none"><path d="M.8 0v11.3H13" stroke="#d0d0d0" stroke-width=".9"/><path d="M1.5 8l3-4 2.5 2.5 2.5-4L12.5 5" stroke="#d0d0d0" stroke-width=".9"/><path d="M1.5 5.5l3 2.5 3-3.5 2.5 2 2.5-3" stroke="#2b88d8" stroke-width=".9"/></svg>
<svg style="left:808.5px;top:207.5px" width="13" height="12" viewBox="0 0 13 12" fill="none"><path d="M.8 11.3V8L3.5 10 6.5 5.5 10.5 11.3z" fill="#2b88d8"/><path d="M.6 11.3L4.8 1.5 7.2 6 9 2l3.6 9.3z" stroke="#d0d0d0" stroke-width=".8" stroke-linejoin="round"/></svg>
<svg style="left:827.25px;top:207.5px" width="13" height="12" viewBox="0 0 13 12" fill="none"><path d="M.8 0v11.3H13" stroke="#d0d0d0" stroke-width=".9"/><path d="M1.5 2l3.2 4 2.8-3.8 2.5 2.3 2.5-2.5v4.5l-2.5 2.5-2.5-2.3L4.7 10.5 1.5 6.5z" fill="#2b88d8"/></svg>
<svg style="left:846px;top:207.5px" width="13" height="12" viewBox="0 0 13 12" fill="none"><path d="M.8 0v11.3H13" stroke="#d0d0d0" stroke-width=".9"/><path d="M1.5 1h11v6.5l-3-2.5-3 3.5-2.5-2.5-2.5 2z" fill="#2b88d8"/><path d="M1.5 8l2.5-2 2.5 2.5 3-3.5 3 2.5" stroke="#d0d0d0" stroke-width=".8"/></svg>
<svg style="left:864.75px;top:207.5px" width="13" height="12" viewBox="0 0 13 12" fill="none"><path d="M.8 0v11.3H13" stroke="#d0d0d0" stroke-width=".9"/><rect x="2.3" y="5" width="2.4" height="6" stroke="#d0d0d0" stroke-width=".7"/><rect x="5.6" y="2.5" width="2.6" height="8.5" fill="#2b88d8"/><rect x="9.3" y="4" width="2.4" height="7" stroke="#d0d0d0" stroke-width=".7"/><path d="M1.5 8.5l3.5-3 3 2.5 4.5-5" stroke="#d0d0d0" stroke-width=".8"/></svg>
<svg style="left:883.5px;top:207.5px" width="13" height="12" viewBox="0 0 13 12" fill="none"><path d="M.8 0v11.3H13" stroke="#d0d0d0" stroke-width=".9"/><rect x="2.3" y="5" width="2.4" height="6" fill="#2b88d8"/><rect x="5.6" y="1" width="2.6" height="10" stroke="#d0d0d0" stroke-width=".7"/><rect x="9.3" y="4" width="2.4" height="7" stroke="#d0d0d0" stroke-width=".7"/><path d="M1.5 9l3.5-3 3 2 4.5-5.5" stroke="#e8a33a" stroke-width=".8"/></svg>
<svg style="left:789.5px;top:225.8px" width="13" height="12" viewBox="0 0 13 12" fill="none"><path d="M.8 0v11.3H13" stroke="#d0d0d0" stroke-width=".9"/><path d="M1.5 9l3-3 3 2.5 5-5V11h-11z" fill="#2b88d8"/><path d="M1.5 3l3.5 4 3-2 4.5 3.5" stroke="#f2b233" stroke-width="1.3"/></svg>
<svg style="left:808.5px;top:225.8px" width="13" height="12" viewBox="0 0 13 12" fill="none"><path d="M.8 0v11.3H13" stroke="#d0d0d0" stroke-width=".9"/><rect x="2.3" y="3" width="2.6" height="8" stroke="#d0d0d0" stroke-width=".8"/><rect x="5.5" y="5.5" width="2.6" height="5.5" fill="#d0d0d0"/><rect x="8.8" y="1" width="2.8" height="10" stroke="#d0d0d0" stroke-width=".8"/></svg>
<svg style="left:827.25px;top:225.8px" width="13" height="12" viewBox="0 0 13 12" fill="none"><rect x=".5" y=".5" width="12" height="2.6" fill="#2b88d8"/><rect x="2" y="4" width="9" height="2.6" fill="#2b88d8"/><rect x="3.5" y="7.5" width="6" height="2" fill="#2b88d8"/><rect x="5" y="10" width="3" height="1.8" fill="#2b88d8"/></svg>
<svg style="left:846px;top:225.8px" width="13" height="12" viewBox="0 0 13 12" fill="none"><path d="M.8 0v11.3H13" stroke="#d0d0d0" stroke-width=".9"/><g fill="#2b88d8"><rect x="3" y="7" width="1.6" height="1.6"/><rect x="6" y="4" width="1.6" height="1.6"/><rect x="9.5" y="1.5" width="1.6" height="1.6"/><rect x="9" y="6.5" width="1.6" height="1.6"/></g><rect x="5" y="8.5" width="1.4" height="1.4" fill="#d0d0d0"/></svg>
<svg style="left:864.75px;top:225.8px" width="13" height="12" viewBox="0 0 13 12" fill="none"><circle cx="6.5" cy="6" r="5.4" stroke="#d0d0d0" stroke-width=".9"/><path d="M6.5 6V.9A5.1 5.1 0 0 1 10.4 9.3z" fill="#2b88d8"/></svg>
<svg style="left:883.5px;top:225.8px" width="13" height="12" viewBox="0 0 13 12" fill="none"><circle cx="6.5" cy="6" r="4.2" stroke="#2b88d8" stroke-width="2.6"/><path d="M2.8 3.4A4.6 4.6 0 0 1 6.5 1.4" stroke="#d0d0d0" stroke-width=".9"/></svg>
<svg style="left:789.5px;top:244.5px" width="13" height="12" viewBox="0 0 13 12" fill="none"><rect x=".5" y=".5" width="6" height="11" fill="#2b88d8"/><rect x="7.3" y=".5" width="5.2" height="5" fill="#2b88d8"/><rect x="7.3" y="6.3" width="5.2" height="5.2" stroke="#d0d0d0" stroke-width=".8"/><path d="M.5 6h6M9.8 6.3v5.2" stroke="#181818" stroke-width=".7"/></svg>
<svg style="left:808.5px;top:244.5px" width="13" height="12" viewBox="0 0 13 12" fill="none"><circle cx="6.5" cy="5" r="4.3" stroke="#d0d0d0" stroke-width=".9"/><circle cx="6.5" cy="5" r="2.3" fill="#3fae5a"/><path d="M3 11.5h7M6.5 9.3v2.2" stroke="#d0d0d0" stroke-width=".9"/></svg>
<svg style="left:827.25px;top:244.5px" width="13" height="12" viewBox="0 0 13 12" fill="none"><path d="M1 1.5l3 1 2.5-1.5 2.5 1.5 3-1v6c0 2-1.5 3-3 3.5l-2.5-1.5L4 11C2 10.5 1 9 1 7z" fill="#2b88d8"/><path d="M1 1.5l3 1 2.5-1.5 2.5 1.5 3-1v6c0 2-1.5 3-3 3.5l-2.5-1.5L4 11C2 10.5 1 9 1 7zM4 2.5V7l2.5 2.5M9 2.5V6L6.5 9.5" stroke="#d0d0d0" stroke-width=".7"/></svg>
<svg style="left:846px;top:244.5px" width="13" height="12" viewBox="0 0 13 12" fill="none"><path d="M6.5 0L12 12 6.5 8.5 1 12z" fill="#2b88d8"/></svg>
<svg style="left:864.75px;top:244.5px" width="13" height="12" viewBox="0 0 13 12" fill="none"><path d="M1.2 10A5.4 5.4 0 0 1 11.8 10" stroke="#2b88d8" stroke-width="2"/><path d="M1.2 10A5.4 5.4 0 0 1 4 5" stroke="#d0d0d0" stroke-width="2"/><path d="M6.5 10l2.5-4" stroke="#d0d0d0" stroke-width=".9"/></svg>
<svg style="left:883.5px;top:244.5px" width="13" height="12" viewBox="0 0 13 12" fill="none"><rect x=".6" y="1.5" width="11.8" height="9" stroke="#d0d0d0" stroke-width=".9"/><rect x="2" y="3" width="9" height="6" fill="#2b4f73"/><text x="6.5" y="8" font-size="5" fill="#d0d0d0" text-anchor="middle" font-family="Liberation Sans, sans-serif">123</text></svg>
<svg style="left:789.5px;top:263.25px" width="13" height="12" viewBox="0 0 13 12" fill="none"><rect x=".6" y=".6" width="11.8" height="10.8" stroke="#d0d0d0" stroke-width=".9"/><path d="M2.5 3.5h5M2.5 6h8M2.5 8.5h6" stroke="#2b88d8" stroke-width="1.2"/></svg>
<svg style="left:808.5px;top:263.25px" width="13" height="12" viewBox="0 0 13 12" fill="none"><rect x=".6" y="1" width="11.8" height="8" stroke="#d0d0d0" stroke-width=".9"/><path d="M3 6.5l1.7-3 1.7 3z" fill="#3fae5a"/><path d="M7 3.5l1.7 3 1.7-3z" fill="#d9534f"/><path d="M1 11.3h11" stroke="#d0d0d0" stroke-width=".9"/></svg>
<svg style="left:827.25px;top:263.25px" width="13" height="12" viewBox="0 0 13 12" fill="none"><rect x=".6" y=".6" width="10" height="8.5" stroke="#d0d0d0" stroke-width=".9"/><path d="M.6 3.2h10M2.5 5.2h3M2.5 7.2h2" stroke="#d0d0d0" stroke-width=".8"/><path d="M6 6h6.5L10 9v3H8.5V9z" fill="#181818" stroke="#d0d0d0" stroke-width=".8"/></svg>
<svg style="left:846px;top:263.25px" width="13" height="12" viewBox="0 0 13 12" fill="none"><rect x=".6" y=".6" width="11.8" height="10.8" stroke="#d0d0d0" stroke-width=".9"/><path d="M.6 4.2h11.8M.6 7.8h11.8M4.5 .6v10.8M8.5 .6v10.8" stroke="#d0d0d0" stroke-width=".8"/></svg>
<svg style="left:864.75px;top:263.25px" width="13" height="12" viewBox="0 0 13 12" fill="none"><rect x=".6" y=".6" width="11.8" height="10.8" fill="#2b88d8" stroke="#d0d0d0" stroke-width=".9"/><rect x=".6" y=".6" width="11.8" height="3.6" fill="#181818" stroke="#d0d0d0" stroke-width=".9"/><path d="M.6 4.2h11.8M.6 7.8h11.8M4.5 .6v10.8M8.5 .6v10.8" stroke="#d0d0d0" stroke-width=".8"/></svg>
<div class="t c" style="left:890px;top:263.75px;font-size:11.5px;color:#2b88d8">R</div>
<div class="t c" style="left:796px;top:281.75px;font-size:11.5px;color:#2b88d8">Py</div>
<svg style="left:808.5px;top:281.75px" width="13" height="12" viewBox="0 0 13 12" fill="none"><path d="M.8 0v11.3H13" stroke="#d0d0d0" stroke-width=".9"/><path d="M1 2.5h7M1 5.5h4M1 8.5h6" stroke="#d0d0d0" stroke-width=".9"/><circle cx="9.5" cy="2.5" r="1.5" fill="#2b88d8"/><circle cx="6.5" cy="5.5" r="1.3" fill="#2b88d8"/></svg>
<svg style="left:827.25px;top:281.75px" width="13" height="12" viewBox="0 0 13 12" fill="none"><rect x=".3" y="4" width="4" height="4" fill="#2b88d8"/><rect x="8.5" y=".3" width="4.2" height="3" fill="#2b88d8"/><rect x="8.5" y="4.5" width="4.2" height="3" fill="#2b88d8"/><rect x="8.5" y="8.7" width="4.2" height="3" fill="#2b88d8"/><path d="M4.3 6h4.2M6.5 1.8v8.4M6.5 1.8h2M6.5 10.2h2" stroke="#2b88d8" stroke-width=".8"/></svg>
<svg style="left:846px;top:281.75px" width="13" height="12" viewBox="0 0 13 12" fill="none"><path d="M.8 .8h11.4v7.5H6L3.5 11V8.3H.8z" stroke="#2b88d8" stroke-width="1"/></svg>
<svg style="left:864.75px;top:281.75px" width="13" height="12" viewBox="0 0 13 12" fill="none"><path d="M1.5 .6h6l3.5 3.3v7.5H1.5zM7.5 .6v3.3H11" stroke="#d0d0d0" stroke-width=".9"/><path d="M3.5 6h5M3.5 8h5M5 5v4.5M7 5v4.5" stroke="#2b88d8" stroke-width=".7"/></svg>
<svg style="left:883.5px;top:281.75px" width="13" height="12" viewBox="0 0 13 12" fill="none"><path d="M3.5 .6h6v4a3 3 0 0 1-6 0z" stroke="#d0d0d0" stroke-width=".9"/><path d="M3.5 1.8H1.2c0 2 .8 3 2.5 3.2M9.5 1.8h2.3c0 2-.8 3-2.5 3.2M6.5 7.6v2" stroke="#d0d0d0" stroke-width=".8"/><path d="M3.8 11.5h5.4l-.8-2H4.6z" fill="#2b88d8"/></svg>
<svg style="left:789.5px;top:300.75px" width="13" height="12" viewBox="0 0 13 12" fill="none"><path d="M1.5 .6h6.5l3.5 3.3v7.5h-10zM8 .6v3.3h3.5" stroke="#d0d0d0" stroke-width=".9"/><path d="M4 10V6.5M6.5 10V5M9 10V7.5" stroke="#d0d0d0" stroke-width="1.2"/></svg>
<svg style="left:808.5px;top:300.75px" width="13" height="12" viewBox="0 0 13 12" fill="none"><rect x="2.5" y="2.5" width="10" height="8" fill="#23527c" stroke="#d0d0d0" stroke-width=".8"/><text x="7.8" y="8.5" font-size="4.5" fill="#d0d0d0" text-anchor="middle" font-family="Liberation Sans, sans-serif">123</text><path d="M2 0h3.5L4 3h2.2L1.2 8.5l1-4H0z" fill="#f3b32f"/></svg>
<svg style="left:827.25px;top:300.75px" width="13" height="12" viewBox="0 0 13 12" fill="none"><rect x="4" y="1.5" width="8" height="6.5" stroke="#d0d0d0" stroke-width=".8"/><path d="M4 4h8" stroke="#d0d0d0" stroke-width=".7"/><path d="M5.5 7h7l-2.5 2.8V12H8.5V9.8z" fill="#d0d0d0"/><path d="M2 0h3.5L4 3h2.2L1.2 8.5l1-4H0z" fill="#f3b32f"/></svg>
<svg style="left:846px;top:300.75px" width="13" height="12" viewBox="0 0 13 12" fill="none"><rect x="1.5" y="1.5" width="11" height="10" stroke="#2b88d8" stroke-width="1"/><path d="M3 9.5l3-3.5 2 2 3.5-4.5" stroke="#2b88d8" stroke-width="1"/><circle cx="2.5" cy="2" r="1.6" fill="#e8833a"/><path d="M2.5 3v2.5" stroke="#e8833a" stroke-width=".9"/><circle cx="10.5" cy="9.5" r="1.3" fill="#e8833a"/></svg>
<svg style="left:864.75px;top:300.75px" width="13" height="12" viewBox="0 0 13 12" fill="none"><path d="M6.5 .6L12.4 6 6.5 11.4 .6 6z" stroke="#8a2da5" stroke-width="1"/><path d="M4 3.5l5 5M9 3.5l-5 5" stroke="#8a2da5" stroke-width=".9"/></svg>
<svg style="left:883.5px;top:300.75px" width="13" height="12" viewBox="0 0 13 12" fill="none"><path d="M.8 1.5h6L12.3 6 6.8 10.5h-6L6.3 6z" stroke="#2b88d8" stroke-width="1"/><path d="M3.5 1.5L9 6l-5.5 4.5" stroke="#2b88d8" stroke-width=".8"/></svg>
<div class="t" style="left:792px;top:317px;font-size:9px;font-weight:bold;color:#ddd;letter-spacing:.3px">...</div>
<div class="a" style="left:783.3px;top:337.3px;width:120px;height:1.5px;background:#3d3d3d"></div>
<div class="t" style="left:791.5px;top:345.95px;font-size:7.9px;color:#fff;transform-origin:0 50%;transform:scaleX(0.955);">Values</div>
<div class="a" style="left:786px;top:358.5px;width:113.8px;height:17.5px;border:1px dotted #4a4a4a"></div>
<div class="t" style="left:793.5px;top:363.95px;font-size:7.9px;color:#fff;">Add data fields here</div>
<div class="t" style="left:791.5px;top:385.75px;font-size:7.9px;color:#fff;font-weight:bold;transform-origin:0 50%;transform:scaleX(0.976);">Drill through</div>
<div class="t" style="left:791.5px;top:402.55px;font-size:7.9px;color:#fff;">Cross-report</div>
<div class="a" style="left:867.3px;top:401.5px;width:21.7px;height:9.6px;background:#2bb392;border-radius:5px"></div>
<div class="t" style="left:870.3px;top:403.6px;font-size:5.6px;color:#134d40;transform-origin:0 50%;transform:scaleX(1.071);">On</div>
<div class="a" style="left:881px;top:403.8px;width:5px;height:5px;background:#1b2a27;border-radius:50%"></div>
<div class="t" style="left:791.5px;top:420.75px;font-size:7.9px;color:#fff;transform-origin:0 50%;transform:scaleX(0.988);">Keep all filters</div>
<div class="a" style="left:867.3px;top:419.7px;width:21.7px;height:9.6px;background:#2bb392;border-radius:5px"></div>
<div class="t" style="left:870.3px;top:421.8px;font-size:5.6px;color:#134d40;transform-origin:0 50%;transform:scaleX(1.071);">On</div>
<div class="a" style="left:881px;top:422px;width:5px;height:5px;background:#1b2a27;border-radius:50%"></div>
<div class="a" style="left:786px;top:436.5px;width:113.8px;height:16.5px;background:#000;border:1px dotted #4a4a4a"></div>
<div class="t" style="left:792.25px;top:441.95px;font-size:7.9px;color:#fff;transform-origin:0 50%;transform:scaleX(1.035);">Add drill-through fields here</div>
<div class="t" style="left:909.75px;top:121.2px;font-size:10.6px;color:#fff;font-weight:bold;transform-origin:0 50%;transform:scaleX(0.947);">Data</div>
<svg style="left:1011.5px;top:123.3px" width="5.5" height="6" viewBox="0 0 6 6" fill="none" stroke="#fff" stroke-width="1.5"><path d="M.6 .6L2.6 3 .6 5.4M3.2 .6L5.2 3 3.2 5.4"/></svg>
<div class="a" style="left:906.8px;top:143.8px;width:114.4px;height:15.6px;background:#242424;border:1px solid #5a5a5a;border-radius:2.5px"></div>
<svg style="left:915px;top:147px" width="9" height="9" viewBox="0 0 9 9" fill="none" stroke="#d0d0d0" stroke-width=".9"><circle cx="3.7" cy="3.7" r="3"/><path d="M6 6l2.6 2.6"/></svg>
<div class="t" style="left:929.25px;top:147.5px;font-size:8.6px;color:#9a9a9a;">Search</div>
<div class="a" style="left:1016.5px;top:165px;width:4.5px;height:236px;background:#9a9898"></div>
<svg style="left:913.5px;top:172px" width="6" height="4" viewBox="0 0 6 4" fill="none" stroke="#e0e0e0" stroke-width=".9"><path d="M.4 .6L3 3.2 5.6 .6"/></svg>
<svg style="left:923px;top:169.5px" width="9" height="9" viewBox="0 0 9 9" fill="none"><rect x=".3" y=".3" width="8.4" height="8.4" rx="1.8" fill="#e4e4e4"/><path d="M.3 3.2h8.4M.3 5.9h8.4M3.2 .3v8.4M5.9 .3v8.4" stroke="#181818" stroke-width=".7"/></svg>
<div class="t" style="left:935.25px;top:170.15px;font-size:7.9px;color:#fff;transform-origin:0 50%;transform:scaleX(0.984);">Orders</div>
<div class="cb" style="top:185.7px"></div><div class="fld" style="top:186.6px">Category</div>
<div class="cb" style="top:201.7px"></div><div class="fld" style="top:202.6px">City</div>
<div class="cb" style="top:217.7px"></div><div class="fld" style="top:218.6px">Country</div>
<div class="cb" style="top:233.7px"></div><div class="fld" style="top:234.6px">Customer ID</div>
<div class="cb" style="top:249.7px"></div><div class="fld" style="top:250.6px">Customer Na...</div>
<div class="cb" style="top:265.7px"></div><div class="fld" style="top:266.6px">Discount</div>
<div class="t" style="left:946px;top:265px;font-size:10px;color:#e0e0e0">Σ</div>
<div class="cb" style="top:281.7px"></div><div class="fld" style="top:282.6px">Order Date</div>
<svg style="left:945.5px;top:281.5px" width="9" height="9" viewBox="0 0 9 9" fill="none"><rect x=".2" y=".2" width="8.6" height="8.6" rx="1.8" fill="#dcdcdc"/><path d="M.2 2.6h8.6" stroke="#181818" stroke-width=".8"/><path d="M2 4.3h5M2 5.7h5M2 7.1h5" stroke="#181818" stroke-width=".8" stroke-dasharray="1 .5"/></svg>
<svg style="left:925.5px;top:283px" width="4" height="6" viewBox="0 0 4 6" fill="none" stroke="#e0e0e0" stroke-width=".9"><path d="M.6 .4L3.2 3 .6 5.6"/></svg>
<div class="cb" style="top:297.7px"></div><div class="fld" style="top:298.6px">Order ID</div>
<div class="cb" style="top:313.7px"></div><div class="fld" style="top:314.6px">Postal Code</div>
<div class="cb" style="top:329.7px"></div><div class="fld" style="top:330.6px">Product ID</div>
<div class="cb" style="top:345.7px"></div><div class="fld" style="top:346.6px">Product Name</div>
<div class="cb" style="top:361.7px"></div><div class="fld" style="top:362.6px">Profit</div>
<div class="t" style="left:946px;top:361px;font-size:10px;color:#e0e0e0">Σ</div>
<div class="cb" style="top:377.7px"></div><div class="fld" style="top:378.6px">Quantity</div>
<div class="t" style="left:946px;top:377px;font-size:10px;color:#e0e0e0">Σ</div>
<div class="cb" style="top:393.7px"></div><div class="fld" style="top:394.6px">Region</div>
<div class="cb" style="top:409.7px"></div><div class="fld" style="top:410.6px">Return Count</div>
<svg style="left:945.5px;top:409.3px" width="8" height="9.4" viewBox="0 0 8 9.4" fill="none"><rect x=".2" y=".2" width="7.6" height="9" rx="1.4" fill="#dcdcdc"/><rect x="1.6" y="1.5" width="4.8" height="1.5" fill="#181818"/><path d="M1.6 4.5h1M3.5 4.5h1M5.4 4.5h1M1.6 6.1h1M3.5 6.1h1M5.4 6.1h1M1.6 7.7h1M3.5 7.7h1M5.4 7.7h1" stroke="#181818" stroke-width=".9"/></svg>
<div class="cb" style="top:425.7px"></div><div class="fld" style="top:426.6px">Return Rate</div>
<svg style="left:945.5px;top:425.3px" width="8" height="9.4" viewBox="0 0 8 9.4" fill="none"><rect x=".2" y=".2" width="7.6" height="9" rx="1.4" fill="#dcdcdc"/><rect x="1.6" y="1.5" width="4.8" height="1.5" fill="#181818"/><path d="M1.6 4.5h1M3.5 4.5h1M5.4 4.5h1M1.6 6.1h1M3.5 6.1h1M5.4 6.1h1M1.6 7.7h1M3.5 7.7h1M5.4 7.7h1" stroke="#181818" stroke-width=".9"/></svg>
<div class="cb" style="top:441.7px"></div><div class="fld" style="top:442.6px">Row ID</div>
<div class="t" style="left:946px;top:441px;font-size:10px;color:#e0e0e0">Σ</div>
<div class="cb" style="top:457.7px"></div><div class="fld" style="top:458.6px">Sales</div>
<div class="t" style="left:946px;top:457px;font-size:10px;color:#e0e0e0">Σ</div>
<div class="cb" style="top:473.7px"></div><div class="fld" style="top:474.6px">Sales Target</div>
<svg style="left:945.5px;top:473.3px" width="8" height="9.4" viewBox="0 0 8 9.4" fill="none"><rect x=".2" y=".2" width="7.6" height="9" rx="1.4" fill="#dcdcdc"/><rect x="1.6" y="1.5" width="4.8" height="1.5" fill="#181818"/><path d="M1.6 4.5h1M3.5 4.5h1M5.4 4.5h1M1.6 6.1h1M3.5 6.1h1M5.4 6.1h1M1.6 7.7h1M3.5 7.7h1M5.4 7.7h1" stroke="#181818" stroke-width=".9"/></svg>
<div class="cb" style="top:489.7px"></div><div class="fld" style="top:490.6px">Segment</div>
<div class="cb" style="top:505.7px"></div><div class="fld" style="top:506.6px">Ship Date</div>
<svg style="left:945.5px;top:505.5px" width="9" height="9" viewBox="0 0 9 9" fill="none"><rect x=".2" y=".2" width="8.6" height="8.6" rx="1.8" fill="#dcdcdc"/><path d="M.2 2.6h8.6" stroke="#181818" stroke-width=".8"/><path d="M2 4.3h5M2 5.7h5M2 7.1h5" stroke="#181818" stroke-width=".8" stroke-dasharray="1 .5"/></svg>
<svg style="left:924px;top:508px" width="6" height="4" viewBox="0 0 6 4" fill="none" stroke="#e0e0e0" stroke-width=".9"><path d="M.4 .6L3 3.2 5.6 .6"/></svg>
<div class="a" style="left:943.5px;top:522px;width:8.5px;height:2.5px;border:1px solid #7c7c7c;border-bottom:none;border-radius:1.5px 1.5px 0 0"></div>
<svg style="left:961px;top:522px" width="4" height="2.5" viewBox="0 0 4 2.5" fill="none" stroke="#d0d0d0" stroke-width=".8"><path d="M.3 2.3L2 .5 3.7 2.3"/></svg>
<div class="a" style="left:27px;top:504.5px;width:756.3px;height:23.5px;background:#292929"></div>
<svg style="left:36px;top:509px" width="12" height="11" viewBox="0 0 12 11" fill="none" stroke="#e0e0e0" stroke-width="1.1"><rect x=".8" y=".8" width="10.4" height="7" rx="1"/><path d="M3.5 10.3h5M6 7.8v2.5"/></svg>
<div class="a" style="left:34px;top:523.5px;width:16px;height:1.5px;background:#2bb392"></div>
<svg style="left:67.5px;top:508.5px" width="7" height="12" viewBox="0 0 7 12" fill="none" stroke="#e0e0e0" stroke-width="1"><rect x=".6" y=".6" width="5.8" height="10.8" rx="1.2"/><path d="M2.5 9.8h2"/></svg>
<svg style="left:89.5px;top:513px" width="4" height="6" viewBox="0 0 4 6" fill="none" stroke="#9a9a9a" stroke-width=".8"><path d="M3.5 .5L.6 3l2.9 2.5z"/></svg>
<svg style="left:103.5px;top:513px" width="4" height="6" viewBox="0 0 4 6" fill="none" stroke="#9a9a9a" stroke-width=".8"><path d="M.5 .5L3.4 3 .5 5.5z"/></svg>
<div class="a" style="left:112.5px;top:505px;width:1px;height:23px;background:#3a3a3a"></div>
<div class="t" style="left:125.75px;top:512.8px;font-size:8.4px;color:#e6e6e6;transform-origin:0 50%;transform:scaleX(0.851);">OVER VIEW</div>
<div class="a" style="left:180px;top:504.5px;width:131.5px;height:23.5px;background:#323232"></div>
<div class="a" style="left:180px;top:525.5px;width:131.5px;height:2px;background:#2bb392"></div>
<div class="t" style="left:193.4px;top:512.8px;font-size:8.4px;color:#fff;font-weight:bold;transform-origin:0 50%;transform:scaleX(0.862);">SALES &amp; RETURNS INSIGHTS</div>
<div class="t" style="left:305px;top:507.8px;font-size:6.8px;font-weight:bold;color:#e8e8e8">x</div>
<div class="t" style="left:325.25px;top:512.8px;font-size:8.4px;color:#e6e6e6;transform-origin:0 50%;transform:scaleX(0.882);">PROFIT BREAKDOWN &amp; DRILLDOWN</div>
<div class="a" style="left:471px;top:504.5px;width:25.8px;height:23.5px;background:#2aa88a"></div>
<svg style="left:480.5px;top:512.5px" width="7" height="7" viewBox="0 0 7 7" stroke="#111" stroke-width="1.6"><path d="M3.5 0v7M0 3.5h7"/></svg>
<div class="a" style="left:0;top:528px;width:1024px;height:17px;background:#141414;border-top:1px solid #2e2e2e"></div>
<div class="t" style="left:3px;top:532.6px;font-size:8.4px;color:#dcdcdc;transform-origin:0 50%;transform:scaleX(0.908);">Page 2 of 3</div>
<div class="t" style="left:882.5px;top:531.5px;font-size:9px;color:#dcdcdc">-</div>
<div class="a" style="left:889.3px;top:536.3px;width:65.5px;height:.8px;background:#bdbdbd"></div>
<div class="a" style="left:913.7px;top:532.5px;width:2.6px;height:8px;background:#e6e6e6;border-radius:1px"></div>
<div class="a" style="left:922px;top:534.5px;width:.8px;height:4px;background:#bdbdbd"></div>
<div class="t" style="left:958.8px;top:531.5px;font-size:9.5px;color:#dcdcdc">+</div>
<div class="t" style="left:973px;top:532.7px;font-size:8px;color:#dcdcdc;transform-origin:0 50%;transform:scaleX(0.968);">80%</div>
<svg style="left:1001.5px;top:532px" width="11" height="9" viewBox="0 0 11 9" fill="none" stroke="#dcdcdc" stroke-width="1"><rect x=".6" y=".6" width="9.8" height="7.8" rx="1.2"/><path d="M2.5 3.5V2.5h1.2M8.5 3.5V2.5H7.3M2.5 5.5v1h1.2M8.5 5.5v1H7.3" stroke-width=".7"/></svg>
<div class="a" style="left:0;top:545px;width:1024px;height:31px;background:#1c1c1c;border-top:1px solid #303030"></div>
<svg style="left:12px;top:549px" width="18" height="19" viewBox="0 0 18 19"><path d="M3.5 9.5a5 5 0 1 0 7.5 6A6.5 6.5 0 0 1 3.5 9.5z" fill="#f5b73a"/><path d="M2.5 8a2 2 0 0 1 .3-4 2.8 2.8 0 0 1 5.4 0 2 2 0 0 1 .2 4z" fill="#d0dcee"/><path d="M8.8 17.3a2 2 0 0 1 .3-4 2.8 2.8 0 0 1 5.3 0 2 2 0 0 1 .3 4z" fill="#b7c9e6"/><circle cx="13.7" cy="4.5" r="4.3" fill="#f08a8a"/></svg>
<div class="t" style="left:23.81px;top:550.2px;font-size:6.8px;color:#3a1a1a;">7</div>
<div class="t" style="left:34px;top:551.2px;font-size:8.2px;color:#f0f0f0;transform-origin:0 50%;transform:scaleX(0.914);">26°C</div>
<div class="t" id="ar" dir="rtl" style="left:33.3px;top:562.3px;font-size:8px;color:#cfcfcf;font-family:'DejaVu Sans',sans-serif;transform-origin:0 50%;transform:scaleX(.93)">غائم جزئيًا</div>
<svg style="left:311.5px;top:552.3px" width="16.5" height="16" viewBox="0 0 16.5 16"><defs><linearGradient id="wg" x1="0" y1="0" x2="1" y2="1"><stop offset="0" stop-color="#6bd0fb"/><stop offset="1" stop-color="#1f8fe8"/></linearGradient></defs><rect x="0" y="0" width="7.8" height="7.6" rx=".8" fill="url(#wg)"/><rect x="8.7" y="0" width="7.8" height="7.6" rx=".8" fill="url(#wg)"/><rect x="0" y="8.4" width="7.8" height="7.6" rx=".8" fill="url(#wg)"/><rect x="8.7" y="8.4" width="7.8" height="7.6" rx=".8" fill="url(#wg)"/></svg>
<div class="a" style="left:336.5px;top:549px;width:146.5px;height:22px;background:#383838;border-radius:11px;border:.6px solid #464646"></div>
<svg style="left:344px;top:555px" width="10" height="10" viewBox="0 0 10 10" fill="none" stroke="#f0f0f0" stroke-width="1.2"><circle cx="4.2" cy="4.2" r="3.3"/><path d="M6.7 6.7L9.5 9.5"/></svg>
<div class="t" style="left:361.5px;top:555.7px;font-size:9.2px;color:#dedede;transform-origin:0 50%;transform:scaleX(0.909);">Search</div>
<div class="a" style="left:491px;top:557px;width:11px;height:10px;background:#6e6e6e;border-radius:1px"></div><div class="a" style="left:495px;top:553px;width:12px;height:10.5px;background:#f0f0f0;border-radius:1px;box-shadow:-1px 1px 0 #b0b0b0"></div>
<svg style="left:520px;top:551px" width="19" height="18" viewBox="0 0 19 18"><circle cx="8.5" cy="9.5" r="8" fill="#e94235"/><path d="M8.5 9.5L1.6 5.5A8 8 0 0 0 8 17.5z" fill="#34a853"/><path d="M8.5 9.5l-.5 8A8 8 0 0 0 15.5 5.5z" fill="#fbbc04"/><circle cx="8.5" cy="9.5" r="3.6" fill="#fff"/><circle cx="8.5" cy="9.5" r="2.8" fill="#4285f4"/><circle cx="13.5" cy="4.5" r="4.2" fill="#c9a9a0"/><circle cx="13.5" cy="3.8" r="1.7" fill="#8a6a62"/></svg>
<div class="a" style="left:526.5px;top:570.5px;width:4px;height:1.5px;background:#9a9a9a;border-radius:1px"></div>
<svg style="left:549px;top:551px" width="17" height="17" viewBox="0 0 17 17"><path d="M8.5 .8a7.7 7.7 0 0 0-6.6 11.6L.8 16.2l3.9-1A7.7 7.7 0 1 0 8.5 .8z" fill="none" stroke="#25d366" stroke-width="1.5"/><path d="M6 4.8c-.5 0-1.2.7-1.2 1.8 0 2.5 3 5.4 5.5 5.4 1 0 1.8-.7 1.8-1.3l-1.8-1-.8.8c-1-.4-2-1.4-2.5-2.5l.8-.8z" fill="#25d366"/></svg>
<svg style="left:578px;top:550px" width="21" height="19" viewBox="0 0 21 19"><circle cx="8.5" cy="10.5" r="7.8" fill="#2a9fda"/><path d="M3.5 10.3l8.5-3.6-1.4 7.3-2.7-2-1.3 1.3-.2-2.2 3.8-3.2-4.7 2.8z" fill="#fff"/><rect x="10" y="1.5" width="10.5" height="6.5" rx="3.2" fill="#e8453c"/></svg>
<div class="t c" style="left:593.3px;top:2.5px;margin-top:550px;font-size:4.8px;color:#fff;font-weight:bold">154</div>
<div class="a" style="left:585px;top:570.5px;width:4px;height:1.5px;background:#9a9a9a;border-radius:1px"></div>
<svg style="left:607.5px;top:552px" width="18" height="15" viewBox="0 0 18 15"><path d="M.5 1.5a1 1 0 0 1 1-1h4.5l1.5 1.5h9a1 1 0 0 1 1 1V13a1 1 0 0 1-1 1h-15a1 1 0 0 1-1-1z" fill="#f2b42b"/><path d="M.5 4h17v9a1 1 0 0 1-1 1h-15a1 1 0 0 1-1-1z" fill="#fbd35f"/><rect x="4.5" y="9.5" width="9" height="4.5" rx=".8" fill="#2d7fd3"/></svg>
<svg style="left:637px;top:551.5px" width="17" height="17" viewBox="0 0 17 17"><circle cx="8.5" cy="8.5" r="8.2" fill="#1ed760"/><path d="M4 6.2c3-.9 6.5-.6 9.2 1M4.5 8.8c2.5-.7 5.3-.4 7.6.9M5 11.2c2-.5 4.2-.3 6 .8" fill="none" stroke="#141414" stroke-width="1.3" stroke-linecap="round"/></svg>
<div class="a" style="left:643.5px;top:570.5px;width:4px;height:1.5px;background:#9a9a9a;border-radius:1px"></div>
<div class="a" style="left:668px;top:553.5px;width:14px;height:14px;background:#0a66c2;border-radius:2px"></div>
<div class="t" style="left:669.8px;top:556px;font-size:10px;font-weight:bold;color:#fff;letter-spacing:-.4px">in</div>
<div class="a" style="left:677.5px;top:549px;width:9.5px;height:9.5px;background:#3aa0e8;border-radius:50%"></div>
<div class="t c" style="left:682.3px;top:550.5px;font-size:6.5px;color:#fff">2</div>
<div class="a" style="left:691.3px;top:547.3px;width:25.7px;height:26px;background:#2b2b2b;border-radius:3px;border:.6px solid #383838"></div>
<svg style="left:697.5px;top:552px" width="14" height="16" viewBox="0 0 14 16"><rect x="8" y="0" width="5" height="15.5" rx="1" fill="#e8a417"/><rect x="4" y="4.5" width="5" height="11" rx="1" fill="#f2c335"/><rect x="0" y="9" width="5" height="6.5" rx="1" fill="#f7dc6a"/></svg>
<div class="a" style="left:699px;top:570.5px;width:10.5px;height:1.8px;background:#4aa3e8;border-radius:1px"></div>
<svg style="left:872px;top:557.5px" width="7" height="5" viewBox="0 0 7 5" fill="none" stroke="#f0f0f0" stroke-width="1"><path d="M.5 4.3L3.5 1 6.5 4.3"/></svg>
<div class="t" style="left:892.5px;top:556.2px;font-size:8px;color:#f0f0f0;transform-origin:0 50%;transform:scaleX(0.923);">ENG</div>
<svg style="left:920.5px;top:555.5px" width="11" height="9" viewBox="0 0 11 9" fill="none" stroke="#f0f0f0" stroke-width=".9"><path d="M.5 3.2a7.2 7.2 0 0 1 10 0M2.2 5a4.8 4.8 0 0 1 6.6 0M3.8 6.7a2.5 2.5 0 0 1 3.4 0"/><circle cx="5.5" cy="8" r=".7" fill="#f0f0f0" stroke="none"/></svg>
<svg style="left:936.5px;top:555.5px" width="11" height="9" viewBox="0 0 11 9" fill="none" stroke="#f0f0f0" stroke-width=".9"><path d="M.6 3.2h1.8L5 1v7L2.4 5.8H.6z"/><path d="M6.5 3a2.2 2.2 0 0 1 0 3M7.8 1.8a4 4 0 0 1 0 5.4M9.2.8a5.6 5.6 0 0 1 0 7.4" stroke-width=".7"/></svg>
<svg style="left:952px;top:555px" width="12" height="9" viewBox="0 0 12 9"><rect x=".8" y="2" width="9.5" height="6" rx="1.2" fill="#f0f0f0"/><rect x="10.3" y="4" width="1.2" height="2.2" fill="#f0f0f0"/><path d="M3 .5l2.5 2H1.5z" fill="#f0f0f0"/><path d="M2.5 3.5l-1 2h1.5l-.8 1.8" stroke="#1c1c1c" stroke-width=".7" fill="none"/></svg>
<div class="t" style="left:978.4px;top:550.5px;font-size:8.2px;color:#f0f0f0;transform-origin:0 50%;transform:scaleX(0.945);">11:23 PM</div>
<div class="t" style="left:974.5px;top:561.1px;font-size:8.2px;color:#f0f0f0;">9/10/2025</div>
</body></html>
